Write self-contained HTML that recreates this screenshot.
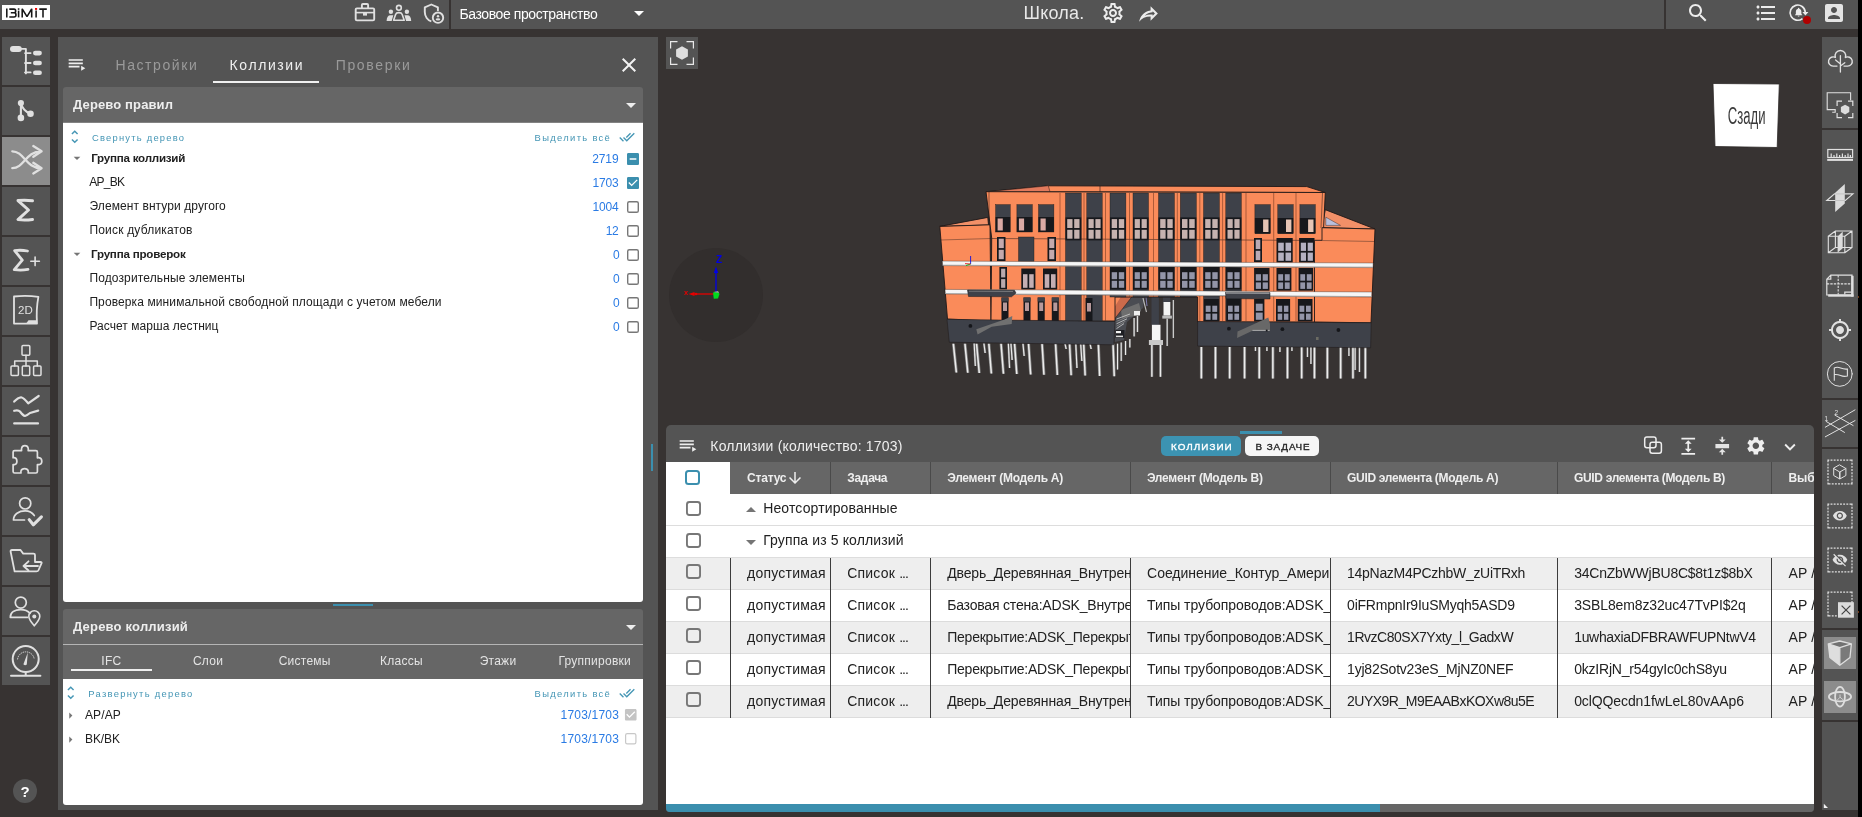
<!DOCTYPE html>
<html><head><meta charset="utf-8"><title>BIMIT</title>
<style>
html,body{margin:0;padding:0}
body{width:1862px;height:817px;overflow:hidden;background:#373332;position:relative;font-family:"Liberation Sans",sans-serif}
.b{position:absolute;display:block}
.t{position:absolute;white-space:pre;overflow:visible}
</style></head><body><div id="app" style="position:absolute;left:0;top:0;width:1862px;height:817px;will-change:transform">
<div class="b" style="left:1858px;top:0px;width:4px;height:817px;background:#000;"></div>
<div class="b" style="left:0px;top:0px;width:1858px;height:29px;background:#545454;"></div>
<div class="b" style="left:2px;top:37px;width:48px;height:48px;background:#545454;"></div>
<div class="b" style="left:2px;top:87px;width:48px;height:48px;background:#545454;"></div>
<div class="b" style="left:2px;top:137px;width:48px;height:48px;background:#8c8c8c;"></div>
<div class="b" style="left:2px;top:187px;width:48px;height:48px;background:#545454;"></div>
<div class="b" style="left:2px;top:237px;width:48px;height:48px;background:#545454;"></div>
<div class="b" style="left:2px;top:287px;width:48px;height:48px;background:#545454;"></div>
<div class="b" style="left:2px;top:337px;width:48px;height:48px;background:#545454;"></div>
<div class="b" style="left:2px;top:387px;width:48px;height:48px;background:#545454;"></div>
<div class="b" style="left:2px;top:437px;width:48px;height:48px;background:#545454;"></div>
<div class="b" style="left:2px;top:487px;width:48px;height:48px;background:#545454;"></div>
<div class="b" style="left:2px;top:537px;width:48px;height:48px;background:#545454;"></div>
<div class="b" style="left:2px;top:587px;width:48px;height:48px;background:#545454;"></div>
<div class="b" style="left:2px;top:637px;width:48px;height:48px;background:#545454;"></div>
<div class="b" style="left:13px;top:779px;width:24px;height:24px;background:#545454;border-radius:50%"></div>
<div class="t" style="left:20.42px;top:779.50px;height:24px;line-height:24px;font-size:15px;color:#fff;font-weight:700;">?</div>
<div class="b" style="left:58px;top:37px;width:600px;height:772.5px;background:#545454;"></div>
<div class="b" style="left:63px;top:87px;width:580px;height:35px;background:#666666;border-radius:3px 3px 0 0"></div>
<div class="b" style="left:63px;top:121.5px;width:580px;height:480.5px;background:#fff;border-radius:0 0 3px 3px"></div>
<div class="b" style="left:63px;top:121.5px;width:580px;height:1.5px;background:linear-gradient(#4a4a4a,#bbb);"></div>
<div class="b" style="left:333px;top:604px;width:40px;height:2px;background:#3b8fae;"></div>
<div class="b" style="left:651px;top:444px;width:2px;height:27px;background:#3b8fae;"></div>
<div class="b" style="left:63px;top:609px;width:580px;height:70px;background:#666666;border-radius:3px 3px 0 0"></div>
<div class="b" style="left:63px;top:644px;width:580px;height:1px;background:#b5b5b5;"></div>
<div class="b" style="left:63px;top:678.5px;width:580px;height:126px;background:#fff;border-radius:0 0 3px 3px"></div>
<div class="b" style="left:666px;top:37px;width:32px;height:32px;background:#545454;"></div>
<div class="b" style="left:666px;top:425px;width:1148px;height:387px;background:#545454;border-radius:5px 5px 4px 4px"></div>
<div class="b" style="left:666px;top:461.5px;width:1148px;height:342.5px;background:#fff;"></div>
<div class="b" style="left:730px;top:461.5px;width:1084px;height:32px;background:#666666;"></div>
<div class="b" style="left:666px;top:804px;width:1148px;height:8px;background:#666;border-radius:0 0 4px 4px"></div>
<div class="b" style="left:666px;top:804px;width:714px;height:8px;background:#3b8fae;border-radius:0 0 0 4px"></div>
<div class="b" style="left:1822px;top:37px;width:36px;height:772.5px;background:#545454;"></div>
<div class="b" style="left:1822px;top:128px;width:36px;height:2px;background:#373332;"></div>
<div class="b" style="left:1822px;top:397.5px;width:36px;height:2px;background:#373332;"></div>
<div class="b" style="left:1822px;top:446.5px;width:36px;height:2px;background:#373332;"></div>
<div class="b" style="left:1822px;top:627.5px;width:36px;height:2px;background:#373332;"></div>
<div class="b" style="left:1822px;top:720px;width:36px;height:2px;background:#373332;"></div>
<div class="b" style="left:1824px;top:637px;width:32px;height:32px;background:#8c8c8c;"></div>
<div class="b" style="left:1824px;top:681px;width:32px;height:32px;background:#8c8c8c;"></div>
<div class="b" style="left:449px;top:0px;width:2px;height:29px;background:#373332;"></div>
<div class="b" style="left:1664px;top:0px;width:2px;height:29px;background:#373332;"></div>
<div class="t" style="left:459.40px;top:3.00px;height:22px;line-height:22px;font-size:14px;color:#fff;letter-spacing:-0.403px;">Базовое пространство</div>
<div class="t" style="left:1023.60px;top:-1.00px;height:29px;line-height:29px;font-size:18px;color:#e8e8e8;letter-spacing:0.179px;">Школа.</div>
<div class="t" style="left:115.50px;top:54.00px;height:22px;line-height:22px;font-size:14px;color:#9a9a9a;letter-spacing:1.569px;">Настройки</div>
<div class="t" style="left:229.60px;top:54.00px;height:22px;line-height:22px;font-size:14px;color:#f0f0f0;letter-spacing:1.592px;">Коллизии</div>
<div class="t" style="left:335.70px;top:54.00px;height:22px;line-height:22px;font-size:14px;color:#9a9a9a;letter-spacing:1.667px;">Проверки</div>
<div class="b" style="left:213px;top:81px;width:106px;height:2px;background:#f0f0f0;"></div>
<div class="t" style="left:73.00px;top:94.00px;height:21px;line-height:21px;font-size:13px;color:#eee;font-weight:700;letter-spacing:0.128px;">Дерево правил</div>
<div class="t" style="left:92.00px;top:130.00px;height:15px;line-height:15px;font-size:9.4px;color:#4596b5;letter-spacing:1.220px;">Свернуть дерево</div>
<div class="t" style="left:534.60px;top:130.00px;height:15px;line-height:15px;font-size:9.4px;color:#4596b5;letter-spacing:1.328px;">Выделить всё</div>
<div class="t" style="left:91.20px;top:148.20px;height:19px;line-height:19px;font-size:11.6px;color:#212121;font-weight:700;letter-spacing:-0.239px;">Группа коллизий</div>
<div class="t" style="left:592.20px;top:149.50px;height:19px;line-height:19px;font-size:12px;color:#2a7be4;letter-spacing:-0.099px;">2719</div>
<div class="t" style="left:89.30px;top:173.00px;height:19px;line-height:19px;font-size:12px;color:#212121;letter-spacing:-0.748px;">AP_BK</div>
<div class="t" style="left:592.50px;top:173.50px;height:19px;line-height:19px;font-size:12px;color:#2a7be4;letter-spacing:-0.199px;">1703</div>
<div class="t" style="left:89.50px;top:197.00px;height:19px;line-height:19px;font-size:12px;color:#212121;letter-spacing:0.080px;">Элемент внтури другого</div>
<div class="t" style="left:592.50px;top:197.50px;height:19px;line-height:19px;font-size:12px;color:#2a7be4;letter-spacing:-0.199px;">1004</div>
<div class="t" style="left:89.40px;top:221.00px;height:19px;line-height:19px;font-size:12px;color:#212121;letter-spacing:0.194px;">Поиск дубликатов</div>
<div class="t" style="left:605.70px;top:221.50px;height:19px;line-height:19px;font-size:12px;color:#2a7be4;letter-spacing:-0.448px;">12</div>
<div class="t" style="left:91.00px;top:244.20px;height:19px;line-height:19px;font-size:11.6px;color:#212121;font-weight:700;letter-spacing:-0.214px;">Группа проверок</div>
<div class="t" style="left:613.00px;top:245.50px;height:19px;line-height:19px;font-size:12px;color:#2a7be4;">0</div>
<div class="t" style="left:89.40px;top:269.00px;height:19px;line-height:19px;font-size:12px;color:#212121;letter-spacing:0.127px;">Подозрительные элементы</div>
<div class="t" style="left:613.00px;top:269.50px;height:19px;line-height:19px;font-size:12px;color:#2a7be4;">0</div>
<div class="t" style="left:89.40px;top:293.00px;height:19px;line-height:19px;font-size:12px;color:#212121;letter-spacing:0.109px;">Проверка минимальной свободной площади с учетом мебели</div>
<div class="t" style="left:613.00px;top:293.50px;height:19px;line-height:19px;font-size:12px;color:#2a7be4;">0</div>
<div class="t" style="left:89.40px;top:317.00px;height:19px;line-height:19px;font-size:12px;color:#212121;letter-spacing:0.052px;">Расчет марша лестниц</div>
<div class="t" style="left:613.00px;top:317.50px;height:19px;line-height:19px;font-size:12px;color:#2a7be4;">0</div>
<div class="t" style="left:73.00px;top:616.00px;height:21px;line-height:21px;font-size:13px;color:#eee;font-weight:700;letter-spacing:0.193px;">Дерево коллизий</div>
<div class="t" style="left:101.31px;top:651.50px;height:19px;line-height:19px;font-size:12px;color:#e4e4e4;letter-spacing:0.25px;">IFC</div>
<div class="t" style="left:192.93px;top:651.50px;height:19px;line-height:19px;font-size:12px;color:#e4e4e4;letter-spacing:0.25px;">Слои</div>
<div class="t" style="left:278.69px;top:651.50px;height:19px;line-height:19px;font-size:12px;color:#e4e4e4;letter-spacing:0.25px;">Системы</div>
<div class="t" style="left:379.97px;top:651.50px;height:19px;line-height:19px;font-size:12px;color:#e4e4e4;letter-spacing:0.25px;">Классы</div>
<div class="t" style="left:479.71px;top:651.50px;height:19px;line-height:19px;font-size:12px;color:#e4e4e4;letter-spacing:0.25px;">Этажи</div>
<div class="t" style="left:558.48px;top:651.50px;height:19px;line-height:19px;font-size:12px;color:#e4e4e4;letter-spacing:0.25px;">Группировки</div>
<div class="b" style="left:71px;top:669px;width:81px;height:2px;background:#eee;"></div>
<div class="t" style="left:88.30px;top:686.00px;height:15px;line-height:15px;font-size:9.4px;color:#4596b5;letter-spacing:1.280px;">Развернуть дерево</div>
<div class="t" style="left:534.60px;top:686.00px;height:15px;line-height:15px;font-size:9.4px;color:#4596b5;letter-spacing:1.328px;">Выделить всё</div>
<div class="t" style="left:85.00px;top:705.50px;height:19px;line-height:19px;font-size:12px;color:#212121;letter-spacing:0.112px;">AP/AP</div>
<div class="t" style="left:85.00px;top:729.50px;height:19px;line-height:19px;font-size:12px;color:#212121;letter-spacing:-0.088px;">BK/BK</div>
<div class="t" style="left:560.60px;top:706.00px;height:19px;line-height:19px;font-size:12px;color:#2a7be4;letter-spacing:0.197px;">1703/1703</div>
<div class="t" style="left:560.60px;top:730.00px;height:19px;line-height:19px;font-size:12px;color:#2a7be4;letter-spacing:0.197px;">1703/1703</div>
<div class="t" style="left:710.30px;top:435.00px;height:22px;line-height:22px;font-size:14px;color:#eee;letter-spacing:0.185px;">Коллизии (количество: 1703)</div>
<div class="b" style="left:1161px;top:435.7px;width:80px;height:20.4px;background:#3c93b2;border-radius:5px"></div>
<div class="b" style="left:1245px;top:435.7px;width:73.8px;height:20.4px;background:#f6f6f6;border-radius:5px"></div>
<div class="t" style="left:1171.00px;top:439.20px;height:16px;line-height:16px;font-size:9.9px;color:#fff;letter-spacing:1.034px;-webkit-text-stroke:0.35px #fff;">КОЛЛИЗИИ</div>
<div class="t" style="left:1255.50px;top:439.20px;height:16px;line-height:16px;font-size:9.9px;color:#262626;letter-spacing:0.900px;-webkit-text-stroke:0.35px #262626;">В ЗАДАЧЕ</div>
<div class="b" style="left:1240px;top:431px;width:42px;height:2.8px;background:#3b8fae;"></div>
<div class="b" style="left:830px;top:461.5px;width:1px;height:32px;background:#4a4a4a;"></div>
<div class="b" style="left:930px;top:461.5px;width:1px;height:32px;background:#4a4a4a;"></div>
<div class="b" style="left:1130px;top:461.5px;width:1px;height:32px;background:#4a4a4a;"></div>
<div class="b" style="left:1330px;top:461.5px;width:1px;height:32px;background:#4a4a4a;"></div>
<div class="b" style="left:1557px;top:461.5px;width:1px;height:32px;background:#4a4a4a;"></div>
<div class="b" style="left:1771px;top:461.5px;width:1px;height:32px;background:#4a4a4a;"></div>
<div class="t" style="left:747.00px;top:468.50px;height:19px;line-height:19px;font-size:12px;color:#eee;font-weight:700;letter-spacing:-0.189px;">Статус</div>
<div class="t" style="left:847.30px;top:468.50px;height:19px;line-height:19px;font-size:12px;color:#eee;font-weight:700;letter-spacing:-0.325px;">Задача</div>
<div class="t" style="left:947.20px;top:468.50px;height:19px;line-height:19px;font-size:12px;color:#eee;font-weight:700;letter-spacing:-0.275px;">Элемент (Модель A)</div>
<div class="t" style="left:1146.90px;top:468.50px;height:19px;line-height:19px;font-size:12px;color:#eee;font-weight:700;letter-spacing:-0.275px;">Элемент (Модель B)</div>
<div class="t" style="left:1347.10px;top:468.50px;height:19px;line-height:19px;font-size:12px;color:#eee;font-weight:700;letter-spacing:-0.325px;">GUID элемента (Модель A)</div>
<div class="t" style="left:1574.00px;top:468.50px;height:19px;line-height:19px;font-size:12px;color:#eee;font-weight:700;letter-spacing:-0.325px;">GUID элемента (Модель B)</div>
<div class="b" style="left:1771px;top:461.5px;width:43px;height:32px;overflow:hidden">
<div class="t" style="left:17.40px;top:7.00px;height:19px;line-height:19px;font-size:12px;color:#eee;font-weight:700;">Выбор</div>
</div>
<div class="b" style="left:666px;top:524.5px;width:1148px;height:1px;background:#ddd;"></div>
<div class="b" style="left:666px;top:556.5px;width:1148px;height:1px;background:#ddd;"></div>
<div class="b" style="left:666px;top:557.5px;width:1148px;height:32px;background:#eeeeee;"></div>
<div class="b" style="left:666px;top:588.5px;width:1148px;height:1px;background:#dcdcdc;"></div>
<div class="b" style="left:666px;top:589.5px;width:1148px;height:32px;background:#fff;"></div>
<div class="b" style="left:666px;top:620.5px;width:1148px;height:1px;background:#dcdcdc;"></div>
<div class="b" style="left:666px;top:621.5px;width:1148px;height:32px;background:#eeeeee;"></div>
<div class="b" style="left:666px;top:652.5px;width:1148px;height:1px;background:#dcdcdc;"></div>
<div class="b" style="left:666px;top:653.5px;width:1148px;height:32px;background:#fff;"></div>
<div class="b" style="left:666px;top:684.5px;width:1148px;height:1px;background:#dcdcdc;"></div>
<div class="b" style="left:666px;top:685.5px;width:1148px;height:32px;background:#eeeeee;"></div>
<div class="b" style="left:666px;top:716.5px;width:1148px;height:1px;background:#dcdcdc;"></div>
<div class="b" style="left:730px;top:557.5px;width:1px;height:160px;background:#3c3c3c;"></div>
<div class="b" style="left:830px;top:557.5px;width:1px;height:160px;background:#3c3c3c;"></div>
<div class="b" style="left:930px;top:557.5px;width:1px;height:160px;background:#3c3c3c;"></div>
<div class="b" style="left:1130px;top:557.5px;width:1px;height:160px;background:#3c3c3c;"></div>
<div class="b" style="left:1330px;top:557.5px;width:1px;height:160px;background:#3c3c3c;"></div>
<div class="b" style="left:1557px;top:557.5px;width:1px;height:160px;background:#3c3c3c;"></div>
<div class="b" style="left:1771px;top:557.5px;width:1px;height:160px;background:#3c3c3c;"></div>
<div class="t" style="left:763.20px;top:496.50px;height:22px;line-height:22px;font-size:14px;color:#212121;letter-spacing:0.135px;">Неотсортированные</div>
<div class="t" style="left:763.20px;top:528.50px;height:22px;line-height:22px;font-size:14px;color:#212121;letter-spacing:0.119px;">Группа из 5 коллизий</div>
<div class="t" style="left:747.00px;top:561.50px;height:22px;line-height:22px;font-size:14px;color:#212121;letter-spacing:0.233px;">допустимая</div>
<div class="t" style="left:847.30px;top:561.50px;height:22px;line-height:22px;font-size:14px;color:#212121;letter-spacing:0.184px;">Список</div>
<div class="t" style="left:899.20px;top:561.50px;height:22px;line-height:22px;font-size:14px;color:#212121;letter-spacing:-1px;">...</div>
<div class="b" style="left:931px;top:557.5px;width:199px;height:31px;overflow:hidden">
<div class="t" style="left:16.20px;top:4.00px;height:22px;line-height:22px;font-size:14px;color:#212121;letter-spacing:-0.127px;">Дверь_Деревянная_Внутренняя</div>
</div>
<div class="b" style="left:1131px;top:557.5px;width:199px;height:31px;overflow:hidden">
<div class="t" style="left:16.10px;top:4.00px;height:22px;line-height:22px;font-size:14px;color:#212121;letter-spacing:-0.037px;">Соединение_Контур_Американка</div>
</div>
<div class="t" style="left:1347.10px;top:561.50px;height:22px;line-height:22px;font-size:14px;color:#212121;letter-spacing:-0.295px;">14pNazM4PCzhbW_zUiTRxh</div>
<div class="t" style="left:1574.20px;top:561.50px;height:22px;line-height:22px;font-size:14px;color:#212121;letter-spacing:-0.235px;">34CnZbWWjBU8C$8t1z$8bX</div>
<div class="b" style="left:1772px;top:557.5px;width:42px;height:31px;overflow:hidden">
<div class="t" style="left:16.40px;top:4.00px;height:22px;line-height:22px;font-size:14px;color:#212121;letter-spacing:0.150px;">AP / BK</div>
</div>
<div class="t" style="left:747.00px;top:593.50px;height:22px;line-height:22px;font-size:14px;color:#212121;letter-spacing:0.233px;">допустимая</div>
<div class="t" style="left:847.30px;top:593.50px;height:22px;line-height:22px;font-size:14px;color:#212121;letter-spacing:0.184px;">Список</div>
<div class="t" style="left:899.20px;top:593.50px;height:22px;line-height:22px;font-size:14px;color:#212121;letter-spacing:-1px;">...</div>
<div class="b" style="left:931px;top:589.5px;width:199px;height:31px;overflow:hidden">
<div class="t" style="left:16.20px;top:4.00px;height:22px;line-height:22px;font-size:14px;color:#212121;letter-spacing:-0.193px;">Базовая стена:ADSK_Внутренняя</div>
</div>
<div class="b" style="left:1131px;top:589.5px;width:199px;height:31px;overflow:hidden">
<div class="t" style="left:16.10px;top:4.00px;height:22px;line-height:22px;font-size:14px;color:#212121;letter-spacing:-0.055px;">Типы трубопроводов:ADSK_Сталь</div>
</div>
<div class="t" style="left:1347.10px;top:593.50px;height:22px;line-height:22px;font-size:14px;color:#212121;letter-spacing:-0.231px;">0iFRmpnIr9IuSMyqh5ASD9</div>
<div class="t" style="left:1574.20px;top:593.50px;height:22px;line-height:22px;font-size:14px;color:#212121;letter-spacing:-0.131px;">3SBL8em8z32uc47TvPI$2q</div>
<div class="b" style="left:1772px;top:589.5px;width:42px;height:31px;overflow:hidden">
<div class="t" style="left:16.40px;top:4.00px;height:22px;line-height:22px;font-size:14px;color:#212121;letter-spacing:0.150px;">AP / BK</div>
</div>
<div class="t" style="left:747.00px;top:625.50px;height:22px;line-height:22px;font-size:14px;color:#212121;letter-spacing:0.233px;">допустимая</div>
<div class="t" style="left:847.30px;top:625.50px;height:22px;line-height:22px;font-size:14px;color:#212121;letter-spacing:0.184px;">Список</div>
<div class="t" style="left:899.20px;top:625.50px;height:22px;line-height:22px;font-size:14px;color:#212121;letter-spacing:-1px;">...</div>
<div class="b" style="left:931px;top:621.5px;width:199px;height:31px;overflow:hidden">
<div class="t" style="left:16.20px;top:4.00px;height:22px;line-height:22px;font-size:14px;color:#212121;letter-spacing:-0.226px;">Перекрытие:ADSK_Перекрытие</div>
</div>
<div class="b" style="left:1131px;top:621.5px;width:199px;height:31px;overflow:hidden">
<div class="t" style="left:16.10px;top:4.00px;height:22px;line-height:22px;font-size:14px;color:#212121;letter-spacing:-0.055px;">Типы трубопроводов:ADSK_Сталь</div>
</div>
<div class="t" style="left:1347.10px;top:625.50px;height:22px;line-height:22px;font-size:14px;color:#212121;letter-spacing:-0.482px;">1RvzC80SX7Yxty_l_GadxW</div>
<div class="t" style="left:1574.20px;top:625.50px;height:22px;line-height:22px;font-size:14px;color:#212121;letter-spacing:-0.321px;">1uwhaxiaDFBRAWFUPNtwV4</div>
<div class="b" style="left:1772px;top:621.5px;width:42px;height:31px;overflow:hidden">
<div class="t" style="left:16.40px;top:4.00px;height:22px;line-height:22px;font-size:14px;color:#212121;letter-spacing:0.150px;">AP / BK</div>
</div>
<div class="t" style="left:747.00px;top:657.50px;height:22px;line-height:22px;font-size:14px;color:#212121;letter-spacing:0.233px;">допустимая</div>
<div class="t" style="left:847.30px;top:657.50px;height:22px;line-height:22px;font-size:14px;color:#212121;letter-spacing:0.184px;">Список</div>
<div class="t" style="left:899.20px;top:657.50px;height:22px;line-height:22px;font-size:14px;color:#212121;letter-spacing:-1px;">...</div>
<div class="b" style="left:931px;top:653.5px;width:199px;height:31px;overflow:hidden">
<div class="t" style="left:16.20px;top:4.00px;height:22px;line-height:22px;font-size:14px;color:#212121;letter-spacing:-0.226px;">Перекрытие:ADSK_Перекрытие</div>
</div>
<div class="b" style="left:1131px;top:653.5px;width:199px;height:31px;overflow:hidden">
<div class="t" style="left:16.10px;top:4.00px;height:22px;line-height:22px;font-size:14px;color:#212121;letter-spacing:-0.055px;">Типы трубопроводов:ADSK_Сталь</div>
</div>
<div class="t" style="left:1347.10px;top:657.50px;height:22px;line-height:22px;font-size:14px;color:#212121;letter-spacing:-0.223px;">1yj82Sotv23eS_MjNZ0NEF</div>
<div class="t" style="left:1574.20px;top:657.50px;height:22px;line-height:22px;font-size:14px;color:#212121;letter-spacing:-0.209px;">0kzIRjN_r54gyIc0chS8yu</div>
<div class="b" style="left:1772px;top:653.5px;width:42px;height:31px;overflow:hidden">
<div class="t" style="left:16.40px;top:4.00px;height:22px;line-height:22px;font-size:14px;color:#212121;letter-spacing:0.150px;">AP / BK</div>
</div>
<div class="t" style="left:747.00px;top:689.50px;height:22px;line-height:22px;font-size:14px;color:#212121;letter-spacing:0.233px;">допустимая</div>
<div class="t" style="left:847.30px;top:689.50px;height:22px;line-height:22px;font-size:14px;color:#212121;letter-spacing:0.184px;">Список</div>
<div class="t" style="left:899.20px;top:689.50px;height:22px;line-height:22px;font-size:14px;color:#212121;letter-spacing:-1px;">...</div>
<div class="b" style="left:931px;top:685.5px;width:199px;height:31px;overflow:hidden">
<div class="t" style="left:16.20px;top:4.00px;height:22px;line-height:22px;font-size:14px;color:#212121;letter-spacing:-0.127px;">Дверь_Деревянная_Внутренняя</div>
</div>
<div class="b" style="left:1131px;top:685.5px;width:199px;height:31px;overflow:hidden">
<div class="t" style="left:16.10px;top:4.00px;height:22px;line-height:22px;font-size:14px;color:#212121;letter-spacing:-0.055px;">Типы трубопроводов:ADSK_Сталь</div>
</div>
<div class="t" style="left:1347.10px;top:689.50px;height:22px;line-height:22px;font-size:14px;color:#212121;letter-spacing:-0.516px;">2UYX9R_M9EAABxKOXw8u5E</div>
<div class="t" style="left:1574.20px;top:689.50px;height:22px;line-height:22px;font-size:14px;color:#212121;letter-spacing:-0.105px;">0clQQecdn1fwLeL80vAAp6</div>
<div class="b" style="left:1772px;top:685.5px;width:42px;height:31px;overflow:hidden">
<div class="t" style="left:16.40px;top:4.00px;height:22px;line-height:22px;font-size:14px;color:#212121;letter-spacing:0.150px;">AP / BK</div>
</div>
<svg class="b" style="left:353px;top:0px;" width="24" height="24" viewBox="0 0 24 24"><g fill="none" stroke="#e0e0e0" stroke-width="1.9" stroke-linejoin="round"><rect x="2.7" y="8.4" width="18.5" height="12" rx="1.2"/><path d="M8.9 8.2 V5 Q8.9 4 9.9 4 H14.1 Q15.1 4 15.1 5 V8.2"/><path d="M2.7 12.6 H21.2" stroke-width="1.6"/></g><rect x="10" y="12.6" width="4" height="3" fill="#e0e0e0"/></svg>
<svg class="b" style="left:386px;top:0px;" width="26" height="26" viewBox="0 0 26 26"><g fill="none" stroke="#e0e0e0" stroke-width="1.6"><circle cx="12.9" cy="7.8" r="2.4"/><path d="M7.6 20.3 L9.6 14.4 Q10.2 12.6 12.9 12.6 Q15.6 12.6 16.2 14.4 L18.2 20.3 Z" stroke-linejoin="round"/></g>
<g fill="#e0e0e0"><circle cx="4.9" cy="11.8" r="2.2"/><circle cx="20.9" cy="11.8" r="2.2"/><path d="M0.6 21 Q0.8 15.2 4.6 15.3 L7.3 15.3 L5.7 21Z"/><path d="M25.2 21 Q25 15.2 21.2 15.3 L18.5 15.3 L20.1 21Z"/></g></svg>
<svg class="b" style="left:420px;top:0px;" width="28" height="28" viewBox="0 0 28 28"><g fill="none" stroke="#e0e0e0" stroke-width="1.9" stroke-linejoin="round"><path d="M17.9 11 V7.3 L11.3 4.5 L4.8 7.3 V12 C4.8 16.5 7.6 20.3 11.3 21.3"/><circle cx="18" cy="17.7" r="5.2"/></g><circle cx="18" cy="16.2" r="1.2" fill="#e0e0e0"/><ellipse cx="18" cy="19.4" rx="2.3" ry="1.1" fill="#e0e0e0"/></svg>
<svg class="b" style="left:627.0px;top:0.8000000000000007px;" width="24" height="24" viewBox="0 0 24 24"><path fill="#fff" d="M7 10l5 5 5-5z"/></svg>
<svg class="b" style="left:1101.0px;top:1.0px;" width="24" height="24" viewBox="0 0 24 24"><path fill="#ececec" d="M19.43 12.98c.04-.32.07-.64.07-.98 0-.34-.03-.66-.07-.98l2.11-1.65c.19-.15.24-.42.12-.64l-2-3.46c-.09-.16-.26-.25-.44-.25-.06 0-.12.01-.17.03l-2.49 1c-.52-.4-1.08-.73-1.69-.98l-.38-2.65C14.46 2.18 14.25 2 14 2h-4c-.25 0-.46.18-.49.42l-.38 2.65c-.61.25-1.17.59-1.69.98l-2.49-1c-.06-.02-.12-.03-.18-.03-.17 0-.34.09-.43.25l-2 3.46c-.13.22-.07.49.12.64l2.11 1.65c-.04.32-.07.65-.07.98 0 .33.03.66.07.98l-2.11 1.65c-.19.15-.24.42-.12.64l2 3.46c.09.16.26.25.44.25.06 0 .12-.01.17-.03l2.49-1c.52.4 1.08.73 1.69.98l.38 2.65c.03.24.24.42.49.42h4c.25 0 .46-.18.49-.42l.38-2.65c.61-.25 1.17-.59 1.69-.98l2.49 1c.06.02.12.03.18.03.17 0 .34-.09.43-.25l2-3.46c.12-.22.07-.49-.12-.64l-2.11-1.65zm-1.98-1.71c.04.31.05.52.05.73 0 .21-.02.43-.05.73l-.14 1.13.89.7 1.08.84-.7 1.21-1.27-.51-1.04-.42-.9.68c-.43.32-.84.56-1.25.73l-1.06.43-.16 1.13-.2 1.35h-1.4l-.19-1.35-.16-1.13-1.06-.43c-.43-.18-.83-.41-1.23-.71l-.91-.7-1.06.43-1.27.51-.7-1.21 1.08-.84.89-.7-.14-1.13c-.03-.31-.05-.54-.05-.74s.02-.43.05-.73l.14-1.13-.89-.7-1.08-.84.7-1.21 1.27.51 1.04.42.9-.68c.43-.32.84-.56 1.25-.73l1.06-.43.16-1.13.2-1.35h1.39l.19 1.35.16 1.13 1.06.43c.43.18.83.41 1.23.71l.91.7 1.06-.43 1.27-.51.7 1.21-1.07.85-.89.7.14 1.13zM12 8c-2.21 0-4 1.79-4 4s1.79 4 4 4 4-1.79 4-4-1.79-4-4-4zm0 6c-1.1 0-2-.9-2-2s.9-2 2-2 2 .9 2 2-.9 2-2 2z"/></svg>
<svg class="b" style="left:1136.2px;top:0.9000000000000004px;" width="25" height="25" viewBox="0 0 24 24"><path fill="#ececec" d="M14,5V9C7,10 4,15 3,20C5.5,16.5 9,14.9 14,14.9V19L21,12L14,5M16,9.83L18.17,12L16,14.17V12.9H14C11.93,12.9 10.07,13.28 8.34,14.07C9.74,12.68 11.54,11.39 14.28,11L16,10.73V9.83Z"/></svg>
<svg class="b" style="left:1686.0px;top:1.0px;" width="24" height="24" viewBox="0 0 24 24"><path fill="#ececec" d="M15.5 14h-.79l-.28-.27C15.41 12.59 16 11.11 16 9.5 16 5.91 13.09 3 9.5 3S3 5.91 3 9.5 5.91 16 9.5 16c1.61 0 3.09-.59 4.23-1.57l.27.28v.79l5 4.99L20.49 19l-4.99-5zm-6 0C7.01 14 5 11.99 5 9.5S7.01 5 9.5 5 14 7.01 14 9.5 11.99 14 9.5 14z"/></svg>
<svg class="b" style="left:1754.4px;top:0.5px;" width="24" height="24" viewBox="0 0 24 24"><path fill="#ececec" d="M4 10.5c-.83 0-1.5.67-1.5 1.5s.67 1.5 1.5 1.5 1.5-.67 1.5-1.5-.67-1.5-1.5-1.5zm0-6c-.83 0-1.5.67-1.5 1.5S3.17 7.5 4 7.5 5.5 6.83 5.5 6 4.83 4.5 4 4.5zm0 12c-.83 0-1.5.68-1.5 1.5s.68 1.5 1.5 1.5 1.5-.68 1.5-1.5-.67-1.5-1.5-1.5zM7 19h14v-2H7v2zm0-6h14v-2H7v2zm0-8v2h14V5H7z"/></svg>
<svg class="b" style="left:1788px;top:2px;" width="24" height="24" viewBox="0 0 24 24"><path d="M17.3 10.2 A7.6 7.6 0 1 0 14.5 16.6" fill="none" stroke="#ececec" stroke-width="1.6"/><path d="M14.4 10 H20.4 L17.4 13.6Z" fill="#ececec"/><g transform="translate(5.1,4.6) scale(0.46)"><path fill="#ececec" d="M12 22c1.1 0 2-.9 2-2h-4c0 1.1.89 2 2 2zm6-6v-5c0-3.07-1.64-5.64-4.5-6.32V4c0-.83-.67-1.5-1.5-1.5s-1.5.67-1.5 1.5v.68C7.63 5.36 6 7.92 6 11v5l-2 2v1h16v-1l-2-2z"/></g><circle cx="19" cy="18" r="4" fill="#b00000"/></svg>
<svg class="b" style="left:1822.0px;top:1.0px;" width="24" height="24" viewBox="0 0 24 24"><path fill="#e4e4e4" d="M3 5v14c0 1.1.89 2 2 2h14c1.1 0 2-.9 2-2V5c0-1.1-.9-2-2-2H5c-1.11 0-2 .9-2 2zm12 4c0 1.66-1.34 3-3 3s-3-1.34-3-3 1.34-3 3-3 3 1.34 3 3zm-9 8c0-2 4-3.1 6-3.1s6 1.1 6 3.1v1H6v-1z"/></svg>
<svg class="b" style="left:67.0px;top:55.0px;" width="20" height="20" viewBox="0 0 24 24"><path fill="#eee" d="M19 9H2v2h17V9zm0-4H2v2h17V5zM2 15h13v-2H2v2zm15-2v6l5-3-5-3z"/></svg>
<svg class="b" style="left:617.3px;top:53.0px;" width="24" height="24" viewBox="0 0 24 24"><path fill="#f2f2f2" d="M19 6.41L17.59 5 12 10.59 6.41 5 5 6.41 10.59 12 5 17.59 6.41 19 12 13.41 17.59 19 19 17.59 13.41 12z"/></svg>
<svg class="b" style="left:619.0px;top:92.5px;" width="24" height="24" viewBox="0 0 24 24"><path fill="#eee" d="M7 10l5 5 5-5z"/></svg>
<svg class="b" style="left:619.0px;top:614.5px;" width="24" height="24" viewBox="0 0 24 24"><path fill="#eee" d="M7 10l5 5 5-5z"/></svg>
<svg class="b" style="left:66.25px;top:128.45px;" width="17.5" height="17.5" viewBox="0 0 24 24"><path fill="#4596b5" d="M12 5.83L15.17 9l1.41-1.41L12 3 7.41 7.59 8.83 9 12 5.83zm0 12.34L8.83 15l-1.41 1.41L12 21l4.59-4.59L15.17 15 12 18.17z"/></svg>
<svg class="b" style="left:62.25px;top:684.45px;" width="17.5" height="17.5" viewBox="0 0 24 24"><path fill="#4596b5" d="M12 5.83L15.17 9l1.41-1.41L12 3 7.41 7.59 8.83 9 12 5.83zm0 12.34L8.83 15l-1.41 1.41L12 21l4.59-4.59L15.17 15 12 18.17z"/></svg>
<svg class="b" style="left:619.4px;top:129.3px;" width="16" height="16" viewBox="0 0 24 24"><path fill="#4596b5" d="M18 7l-1.41-1.41-6.34 6.34 1.41 1.41L18 7zm4.24-1.41L11.66 16.17 7.48 12l-1.41 1.41L11.66 19l12-12-1.42-1.41zM.41 13.41L6 19l1.41-1.41L1.83 12 .41 13.41z"/></svg>
<svg class="b" style="left:619.4px;top:685.3px;" width="16" height="16" viewBox="0 0 24 24"><path fill="#4596b5" d="M18 7l-1.41-1.41-6.34 6.34 1.41 1.41L18 7zm4.24-1.41L11.66 16.17 7.48 12l-1.41 1.41L11.66 19l12-12-1.42-1.41zM.41 13.41L6 19l1.41-1.41L1.83 12 .41 13.41z"/></svg>
<svg class="b" style="left:68.7px;top:150.3px;" width="16" height="16" viewBox="0 0 24 24"><path fill="#757575" d="M7 10l5 5 5-5z"/></svg>
<svg class="b" style="left:68.7px;top:246.3px;" width="16" height="16" viewBox="0 0 24 24"><path fill="#757575" d="M7 10l5 5 5-5z"/></svg>
<svg class="b" style="left:63.099999999999994px;top:707.5px;" width="15" height="15" viewBox="0 0 24 24"><path fill="#757575" d="M10 17l5-5-5-5v10z"/></svg>
<svg class="b" style="left:63.099999999999994px;top:731.5px;" width="15" height="15" viewBox="0 0 24 24"><path fill="#757575" d="M10 17l5-5-5-5v10z"/></svg>
<svg class="b" style="left:625.0px;top:151.0px;" width="16" height="16" viewBox="0 0 24 24"><path fill="#3b8fae" d="M19 3H5c-1.1 0-2 .9-2 2v14c0 1.1.9 2 2 2h14c1.1 0 2-.9 2-2V5c0-1.1-.9-2-2-2zm-2 10H7v-2h10v2z"/></svg>
<svg class="b" style="left:625.0px;top:175.0px;" width="16" height="16" viewBox="0 0 24 24"><path fill="#3b8fae" d="M19 3H5c-1.11 0-2 .9-2 2v14c0 1.1.89 2 2 2h14c1.11 0 2-.9 2-2V5c0-1.1-.89-2-2-2zm-9 14l-5-5 1.41-1.41L10 14.17l7.59-7.59L19 8l-9 9z"/></svg>
<svg class="b" style="left:625.0px;top:199.0px" width="16" height="16"><rect x="2.7" y="2.7" width="10.6" height="10.6" rx="1.6" fill="none" stroke="#777" stroke-width="1.4"/></svg>
<svg class="b" style="left:625.0px;top:223.0px" width="16" height="16"><rect x="2.7" y="2.7" width="10.6" height="10.6" rx="1.6" fill="none" stroke="#777" stroke-width="1.4"/></svg>
<svg class="b" style="left:625.0px;top:247.0px" width="16" height="16"><rect x="2.7" y="2.7" width="10.6" height="10.6" rx="1.6" fill="none" stroke="#777" stroke-width="1.4"/></svg>
<svg class="b" style="left:625.0px;top:271.0px" width="16" height="16"><rect x="2.7" y="2.7" width="10.6" height="10.6" rx="1.6" fill="none" stroke="#777" stroke-width="1.4"/></svg>
<svg class="b" style="left:625.0px;top:295.0px" width="16" height="16"><rect x="2.7" y="2.7" width="10.6" height="10.6" rx="1.6" fill="none" stroke="#777" stroke-width="1.4"/></svg>
<svg class="b" style="left:625.0px;top:319.0px" width="16" height="16"><rect x="2.7" y="2.7" width="10.6" height="10.6" rx="1.6" fill="none" stroke="#777" stroke-width="1.4"/></svg>
<svg class="b" style="left:623.45px;top:707.05px;" width="15.5" height="15.5" viewBox="0 0 24 24"><path fill="#c4c4c4" d="M19 3H5c-1.11 0-2 .9-2 2v14c0 1.1.89 2 2 2h14c1.11 0 2-.9 2-2V5c0-1.1-.89-2-2-2zm-9 14l-5-5 1.41-1.41L10 14.17l7.59-7.59L19 8l-9 9z"/></svg>
<svg class="b" style="left:623.45px;top:731.05px" width="15.5" height="15.5"><rect x="2.6" y="2.6" width="10.3" height="10.3" rx="1.6" fill="none" stroke="#c8c8c8" stroke-width="1.2"/></svg>
<svg class="b" style="left:677.8px;top:435.6px;" width="20" height="20" viewBox="0 0 24 24"><path fill="#eee" d="M19 9H2v2h17V9zm0-4H2v2h17V5zM2 15h13v-2H2v2zm15-2v6l5-3-5-3z"/></svg>
<svg class="b" style="left:786.0px;top:469.2px;" width="18" height="18" viewBox="0 0 24 24"><path fill="#eee" d="M20 12l-1.41-1.41L13 16.17V4h-2v12.17l-5.58-5.59L4 12l8 8 8-8z"/></svg>
<svg class="b" style="left:739.1px;top:497.5px;" width="24" height="24" viewBox="0 0 24 24"><path fill="#757575" d="M7 14l5-5 5 5z"/></svg>
<svg class="b" style="left:739.1px;top:530.0px;" width="24" height="24" viewBox="0 0 24 24"><path fill="#757575" d="M7 10l5 5 5-5z"/></svg>
<svg class="b" style="left:1642px;top:434px;" width="22" height="22" viewBox="0 0 22 22"><g fill="none" stroke="#eee" stroke-width="1.5"><rect x="2.7" y="2.9" width="11.3" height="10.8" rx="2.2"/><rect x="8" y="8.3" width="11.4" height="10.9" rx="2.2"/></g></svg>
<svg class="b" style="left:1677.75px;top:436.35px;" width="20.5" height="20.5" viewBox="0 0 24 24"><path fill="#eee" d="M4 20h16v2H4zM4 2h16v2H4zm9 7h3l-4-4-4 4h3v6H8l4 4 4-4h-3z"/></svg>
<svg class="b" style="left:1711.65px;top:436.05px;" width="20.5" height="20.5" viewBox="0 0 24 24"><path fill="#e4e4e4" d="M8 19h3v3h2v-3h3l-4-4-4 4zm8-15h-3V1h-2v3H8l4 4 4-4zM4 9.3v4.9h16V9.3H4z"/></svg>
<svg class="b" style="left:1745.15px;top:435.34999999999997px;" width="21.7" height="21.7" viewBox="0 0 24 24"><path fill="#eee" d="M19.14,12.94c0.04-0.3,0.06-0.61,0.06-0.94c0-0.32-0.02-0.64-0.07-0.94l2.03-1.58c0.18-0.14,0.23-0.41,0.12-0.61 l-1.92-3.32c-0.12-0.22-0.37-0.29-0.59-0.22l-2.39,0.96c-0.5-0.38-1.03-0.7-1.62-0.94L14.4,2.81c-0.04-0.24-0.24-0.41-0.48-0.41 h-3.84c-0.24,0-0.43,0.17-0.47,0.41L9.25,5.35C8.66,5.59,8.12,5.92,7.63,6.29L5.24,5.33c-0.22-0.08-0.47,0-0.59,0.22L2.74,8.87 C2.62,9.08,2.66,9.34,2.86,9.48l2.03,1.58C4.84,11.36,4.8,11.69,4.8,12s0.02,0.64,0.07,0.94l-2.03,1.58 c-0.18,0.14-0.23,0.41-0.12,0.61l1.92,3.32c0.12,0.22,0.37,0.29,0.59,0.22l2.39-0.96c0.5,0.38,1.03,0.7,1.62,0.94l0.36,2.54 c0.05,0.24,0.24,0.41,0.48,0.41h3.84c0.24,0,0.44-0.17,0.47-0.41l0.36-2.54c0.59-0.24,1.13-0.56,1.62-0.94l2.39,0.96 c0.22,0.08,0.47,0,0.59-0.22l1.92-3.32c0.12-0.22,0.07-0.47-0.12-0.61L19.14,12.94z M12,15.6c-1.98,0-3.6-1.62-3.6-3.6 s1.62-3.6,3.6-3.6s3.6,1.62,3.6,3.6S13.98,15.6,12,15.6z"/></svg>
<svg class="b" style="left:1779.0px;top:435.5px;" width="22" height="22" viewBox="0 0 24 24"><path fill="#eee" d="M16.59 8.59L12 13.17 7.41 8.59 6 10l6 6 6-6z"/></svg>
<svg class="b" style="left:682.5px;top:468.3px" width="19" height="19"><rect x="3.0" y="3.0" width="13" height="13" rx="2.5" fill="none" stroke="#3b8fae" stroke-width="2"/></svg>
<svg class="b" style="left:684.3px;top:498.5px" width="19" height="19"><rect x="2.95" y="2.95" width="13.1" height="13.1" rx="2.5" fill="none" stroke="#777" stroke-width="1.9"/></svg>
<svg class="b" style="left:684.3px;top:530.5px" width="19" height="19"><rect x="2.95" y="2.95" width="13.1" height="13.1" rx="2.5" fill="none" stroke="#777" stroke-width="1.9"/></svg>
<svg class="b" style="left:684.3px;top:562.2px" width="19" height="19"><rect x="2.95" y="2.95" width="13.1" height="13.1" rx="2.5" fill="none" stroke="#777" stroke-width="1.9"/></svg>
<svg class="b" style="left:684.3px;top:594.2px" width="19" height="19"><rect x="2.95" y="2.95" width="13.1" height="13.1" rx="2.5" fill="none" stroke="#777" stroke-width="1.9"/></svg>
<svg class="b" style="left:684.3px;top:626.2px" width="19" height="19"><rect x="2.95" y="2.95" width="13.1" height="13.1" rx="2.5" fill="none" stroke="#777" stroke-width="1.9"/></svg>
<svg class="b" style="left:684.3px;top:658.2px" width="19" height="19"><rect x="2.95" y="2.95" width="13.1" height="13.1" rx="2.5" fill="none" stroke="#777" stroke-width="1.9"/></svg>
<svg class="b" style="left:684.3px;top:690.2px" width="19" height="19"><rect x="2.95" y="2.95" width="13.1" height="13.1" rx="2.5" fill="none" stroke="#777" stroke-width="1.9"/></svg>
<svg class="b" style="left:2px;top:37px;" width="48" height="48" viewBox="0 0 48 48"><rect x="8" y="9" width="11.8" height="5.9" rx="2.95" fill="#e0e0e0"/>
<path fill="none" stroke="#e0e0e0" stroke-linecap="round" stroke-linejoin="round" stroke-width="1.9" stroke-linecap="butt" d="M19 11.9 H23.9 V36.4 M23 16.1 H28.6 M23 26 H28.6 M23 35.4 H28.6"/>
<rect x="31" y="13.8" width="8.9" height="4.6" rx="2.3" fill="#e0e0e0"/><rect x="31" y="23.7" width="8.9" height="4.6" rx="2.3" fill="#e0e0e0"/><rect x="31" y="33.4" width="8.9" height="4.6" rx="2.3" fill="#e0e0e0"/></svg>
<svg class="b" style="left:2px;top:87px;" width="48" height="48" viewBox="0 0 48 48"><path fill="none" stroke="#e0e0e0" stroke-linecap="round" stroke-linejoin="round" stroke-width="2.1" d="M18.9 16 V30.9 M18.9 16 Q20.5 23.5 28.5 26.8"/>
<circle cx="18.9" cy="16" r="3.1" fill="#e0e0e0"/><circle cx="18.9" cy="30.9" r="3.3" fill="#e0e0e0"/><circle cx="28.5" cy="26.8" r="3.3" fill="#e0e0e0"/></svg>
<svg class="b" style="left:2px;top:137px;" width="48" height="48" viewBox="0 0 48 48"><path fill="none" stroke="#e0e0e0" stroke-linecap="round" stroke-linejoin="round" stroke-width="2.3" d="M10.3 14.3 C22 14.3 24 31.2 39 31.2 M10.3 31.2 C22 31.2 24 14.3 39 14.3 M31.3 9 L39.6 14.3 L31.3 19.8 M31.3 25.8 L39.6 31.2 L31.3 36.5"/></svg>
<svg class="b" style="left:2px;top:187px;" width="48" height="48" viewBox="0 0 48 48"><path fill="none" stroke="#e0e0e0" stroke-linecap="round" stroke-linejoin="round" stroke-width="3" d="M30.5 13.8 Q23 12.6 16 13.6 L26.5 23 L16 32.6 Q23 33.6 30.5 32.4"/></svg>
<svg class="b" style="left:2px;top:237px;" width="48" height="48" viewBox="0 0 48 48"><path fill="none" stroke="#e0e0e0" stroke-linecap="round" stroke-linejoin="round" stroke-width="2.8" d="M25.5 14 Q19 12.7 12.6 13.6 L20.3 23.2 L12.3 32.6 Q19 33.6 26 32.4"/><path fill="none" stroke="#e0e0e0" stroke-linecap="round" stroke-linejoin="round" stroke-width="1.6" d="M28.8 24.3 H37.4 M33.1 20 V28.6"/></svg>
<svg class="b" style="left:2px;top:287px;" width="48" height="48" viewBox="0 0 48 48"><path fill="none" stroke="#e0e0e0" stroke-linecap="round" stroke-linejoin="round" stroke-width="1.8" d="M12 9.5 Q24 8 36.4 9.8 Q34 22 35 36.6 H12 Z"/><path d="M24.5 36 L26.5 33.2 H35 V36.6Z" fill="#e0e0e0"/>
<text x="23.4" y="26.6" font-family="Liberation Sans, sans-serif" font-size="11.5" fill="#e0e0e0" text-anchor="middle">2D</text></svg>
<svg class="b" style="left:2px;top:337px;" width="48" height="48" viewBox="0 0 48 48"><g fill="none" stroke="#e0e0e0" stroke-linecap="round" stroke-linejoin="round" stroke-width="1.5"><rect x="20" y="8.6" width="7.8" height="9.6" rx="1"/><rect x="9" y="29" width="7.4" height="9.6" rx="1"/><rect x="20.3" y="29" width="7.4" height="9.6" rx="1"/><rect x="31.6" y="29" width="7.4" height="9.6" rx="1"/><path d="M24 18.2 V29 M12.7 29 V24 H35.3 V29"/></g></svg>
<svg class="b" style="left:2px;top:387px;" width="48" height="48" viewBox="0 0 48 48"><g fill="none" stroke="#e0e0e0" stroke-linecap="round" stroke-linejoin="round" stroke-width="2.2"><path d="M12.2 14.6 Q16 10.5 19 10.3 Q22 11 26.2 16.3 L36.7 9"/><path d="M12.2 23.8 Q16 22.5 18 24.5 Q21 28.5 23 29 Q25 28.5 28 26 L36.2 23.6"/><path d="M12.2 36.4 H36"/></g></svg>
<svg class="b" style="left:2px;top:437px;" width="48" height="48" viewBox="0 0 48 48"><path fill="none" stroke="#e0e0e0" stroke-linecap="round" stroke-linejoin="round" stroke-width="1.7" d="M12.6 13.6 H19.6 C19.6 13.6 18.6 8.6 22.9 8.6 C27.2 8.6 26.2 13.6 26.2 13.6 H33.9 Q35.4 13.6 35.4 15.1 V20.8 C35.4 20.8 39.8 19.8 39.8 24.2 C39.8 28.6 35.4 27.6 35.4 27.6 V34.5 Q35.4 36 33.9 36 H26.2 C26.2 36 27.2 31.7 22.6 31.7 C18 31.7 19 36 19 36 H12.6 Q11.1 36 11.1 34.5 V27.6 C11.1 27.6 14.9 28.6 14.9 24.2 C14.9 19.8 11.1 20.8 11.1 20.8 V15.1 Q11.1 13.6 12.6 13.6 Z"/></svg>
<svg class="b" style="left:2px;top:487px;" width="48" height="48" viewBox="0 0 48 48"><circle cx="23.2" cy="16.4" r="5.6" fill="none" stroke="#e0e0e0" stroke-linecap="round" stroke-linejoin="round" stroke-width="1.7"/><path fill="none" stroke="#e0e0e0" stroke-linecap="round" stroke-linejoin="round" stroke-width="1.7" d="M22.5 33 H11.5 C11.5 27 17 23.9 23.2 23.9 C27 23.9 30.2 25.6 32.3 28.6"/><path fill="none" stroke="#e0e0e0" stroke-linecap="round" stroke-linejoin="round" stroke-width="3.1" stroke-linecap="butt" d="M27.2 32.6 L31.3 37.8 L39.4 29.8"/></svg>
<svg class="b" style="left:2px;top:537px;" width="48" height="48" viewBox="0 0 48 48"><path fill="none" stroke="#e0e0e0" stroke-linecap="round" stroke-linejoin="round" stroke-width="1.8" d="M12.6 34.4 L8.6 14.5 Q8.4 13 10 13 H18.5 L21.2 16.6 H31.5 Q33 16.6 33 18 V25 M12.6 34.4 H34.5 Q36 34.4 36.6 33 L39.6 26.2 Q40 25 38.5 25 H33"/><path fill="none" stroke="#e0e0e0" stroke-linecap="round" stroke-linejoin="round" stroke-width="1.8" d="M36 29 H21.5 M26.5 24.3 L21.5 29 L26.5 33.5"/></svg>
<svg class="b" style="left:2px;top:587px;" width="48" height="48" viewBox="0 0 48 48"><circle cx="18.8" cy="15.6" r="5.5" fill="none" stroke="#e0e0e0" stroke-linecap="round" stroke-linejoin="round" stroke-width="1.7"/><path fill="none" stroke="#e0e0e0" stroke-linecap="round" stroke-linejoin="round" stroke-width="1.7" d="M25.5 30.3 H8.3 C8.3 25 13 22.6 18.8 22.6 C23 22.6 26 24 28 26.4"/><path fill="none" stroke="#e0e0e0" stroke-linecap="round" stroke-linejoin="round" stroke-width="1.6" d="M32.3 38.8 C28.5 34.5 26.8 32 26.8 29.3 A5.5 5.5 0 0 1 37.8 29.3 C37.8 32 36.1 34.5 32.3 38.8Z"/><circle cx="32.3" cy="29.4" r="2" fill="#e0e0e0"/></svg>
<svg class="b" style="left:2px;top:637px;" width="48" height="48" viewBox="0 0 48 48"><circle cx="23.7" cy="22.1" r="13" fill="none" stroke="#e0e0e0" stroke-linecap="round" stroke-linejoin="round" stroke-width="2"/><path fill="none" stroke="#e0e0e0" stroke-linecap="round" stroke-linejoin="round" stroke-width="2" d="M9 38.8 H38.4 M23.7 35.2 V38.8"/><path d="M21.4 27.2 L25.8 15.6 L24.8 27.6 Q23 29 21.4 27.2Z" fill="#e0e0e0"/><path d="M15.6 22 A8.4 8.4 0 0 1 32 21" fill="none" stroke="#e0e0e0" stroke-linecap="round" stroke-linejoin="round" stroke-width="1" stroke-dasharray="0.6 1.6"/></svg>
<svg class="b" style="left:1822px;top:43px;" width="36" height="36" viewBox="0 0 36 36"><path fill="none" stroke="#e0e0e0" stroke-linecap="round" stroke-linejoin="round" stroke-width="1.4" d="M15 23.1 H11.2 A4.6 4.6 0 1 1 13.4 14.5 A5.3 5.3 0 1 1 23.4 14.5 A4.6 4.6 0 1 1 25.6 23.1 H22"/><path fill="none" stroke="#e0e0e0" stroke-linecap="round" stroke-linejoin="round" stroke-width="1.3" d="M18.4 12.6 V29 M18.4 20.9 L13.6 17 M18.4 23 L22.8 19.7"/></svg>
<svg class="b" style="left:1822px;top:87px;" width="36" height="36" viewBox="0 0 36 36"><path fill="none" stroke="#e0e0e0" stroke-linecap="butt" stroke-linejoin="miter" stroke-width="1.1" d="M28.6 13.2 V5.7 H5.2 V22.6 H13.2 V25.2 H10.2"/><path fill="none" stroke="#e0e0e0" stroke-linecap="butt" stroke-linejoin="miter" stroke-width="1.2" d="M15.1 19 V14.2 H20 M26 14.2 H30.8 V19 M30.8 26 V30.7 H26 M20 30.7 H15.1 V26"/><path d="M23.1 17.7 L27.3 20.1 V25 L23.1 27.5 L18.9 25 V20.1Z" fill="#dcdcdc"/></svg>
<svg class="b" style="left:1822px;top:136px;" width="36" height="36" viewBox="0 0 36 36"><rect x="5.8" y="13.5" width="24.8" height="8" fill="none" stroke="#e0e0e0" stroke-linecap="butt" stroke-linejoin="miter" stroke-width="1.2"/><rect x="5.2" y="22.9" width="25.8" height="2" fill="#e0e0e0"/><path fill="none" stroke="#e0e0e0" stroke-linecap="butt" stroke-linejoin="miter" stroke-width="1.2" d="M9.2 21.5 V17.5 M12 21.5 V19 M14.8 21.5 V17.5 M17.6 21.5 V19 M20.4 21.5 V17.5 M23.2 21.5 V19 M26 21.5 V17.5 M28.4 21.5 V19"/></svg>
<svg class="b" style="left:1822px;top:180px;" width="36" height="36" viewBox="0 0 36 36"><path fill="none" stroke="#e0e0e0" stroke-linecap="butt" stroke-linejoin="miter" stroke-width="1.1" d="M4.8 20.5 L12.5 13.9 H31 L23.3 20.5Z"/><path d="M13.2 12.8 L22.8 4 V23.6 L13.2 32.1Z" fill="#dcdcdc"/><path d="M13.2 20.5 H22.8 M14 13.9 H22.8" stroke="#bcbcbc" stroke-width="0.8" fill="none"/></svg>
<svg class="b" style="left:1822px;top:224px;" width="36" height="36" viewBox="0 0 36 36"><path fill="none" stroke="#e0e0e0" stroke-linecap="butt" stroke-linejoin="miter" stroke-width="1.1" d="M6.3 12.3 H22.8 V28.8 H6.3Z M13.4 7 H30 V23.5 H13.4Z M6.3 12.3 L13.4 7 M22.8 12.3 L30 7 M22.8 28.8 L30 23.5 M6.3 28.8 L13.4 23.5"/><path d="M15.6 12.6 L20.7 7.4 V24.2 L15.6 28.8Z" fill="#dcdcdc"/></svg>
<svg class="b" style="left:1822px;top:268px;" width="36" height="36" viewBox="0 0 36 36"><path fill="none" stroke="#e0e0e0" stroke-linecap="butt" stroke-linejoin="miter" stroke-width="1.2" d="M8.8 7.2 H30 V27 H4.8 V11.2 Z M4.8 11.2 H8.8 V7.2"/><rect x="29.2" y="7.8" width="2.4" height="20.8" fill="#e0e0e0"/><rect x="6.2" y="26.4" width="25.4" height="2.3" fill="#e0e0e0"/><path fill="none" stroke="#e0e0e0" stroke-linecap="butt" stroke-linejoin="miter" stroke-width="1.1" stroke-dasharray="2.4 1.1" d="M16.2 7.2 V26.6 M4.8 15.9 H29.6"/><path fill="none" stroke="#e0e0e0" stroke-linecap="butt" stroke-linejoin="miter" stroke-width="1.2" d="M22.8 26.4 V24.2 H29.4"/></svg>
<svg class="b" style="left:1827.8px;top:318.0px;" width="24" height="24" viewBox="0 0 24 24"><path fill="#e0e0e0" d="M12 8c-2.21 0-4 1.79-4 4s1.79 4 4 4 4-1.79 4-4-1.79-4-4-4zm8.94 3c-.46-4.17-3.77-7.48-7.94-7.94V1h-2v2.06C6.83 3.52 3.52 6.83 3.06 11H1v2h2.06c.46 4.17 3.77 7.48 7.94 7.94V23h2v-2.06c4.17-.46 7.48-3.77 7.94-7.94H23v-2h-2.06zM12 19c-3.87 0-7-3.13-7-7s3.13-7 7-7 7 3.13 7 7-3.13 7-7 7z"/></svg>
<svg class="b" style="left:1822px;top:356px;" width="36" height="36" viewBox="0 0 36 36"><circle cx="17.8" cy="17.9" r="12.4" fill="none" stroke="#e0e0e0" stroke-linecap="round" stroke-linejoin="round" stroke-width="1"/><path fill="none" stroke="#e0e0e0" stroke-linecap="butt" stroke-linejoin="miter" stroke-width="1.1" d="M12.3 24.8 V12 Q15 10.6 18.6 12 T25.4 13 V20 Q22 21 18.6 19.6 T12.3 18.6"/></svg>
<svg class="b" style="left:1822px;top:405px;" width="36" height="36" viewBox="0 0 36 36"><path fill="none" stroke="#e0e0e0" stroke-linecap="round" stroke-linejoin="round" stroke-width="1" d="M3.3 22.2 L33 4.9 M3.3 31.8 L33 15.6 M4.1 16.4 L22.5 27.4 M12.9 10.1 L31.1 20.5"/><text x="4.4" y="16" font-family="Liberation Sans, sans-serif" font-size="6.5" fill="#e0e0e0" text-anchor="middle">1</text><text x="14.3" y="9.7" font-family="Liberation Sans, sans-serif" font-size="6.5" fill="#e0e0e0" text-anchor="middle">2</text></svg>
<svg class="b" style="left:1822px;top:454px;" width="36" height="36" viewBox="0 0 36 36"><path fill="none" stroke="#e0e0e0" stroke-linecap="butt" stroke-linejoin="miter" stroke-width="1.2" stroke-dasharray="1.9 1.257" d="M5.4 6.2 H30.6 M30 5.6 V30.4 M30.6 29.8 H5.4 M6 30.4 V5.6"/><path fill="none" stroke="#e0e0e0" stroke-linecap="round" stroke-linejoin="round" stroke-width="1" d="M17.8 11 L23.9 14.5 V21.5 L17.8 25 L11.7 21.5 V14.5Z M11.7 14.5 L17.8 18 L23.9 14.5"/><path fill="none" stroke="#e0e0e0" stroke-linecap="butt" stroke-linejoin="miter" stroke-width="1.5" d="M17.8 18 V25"/></svg>
<svg class="b" style="left:1822px;top:498px;" width="36" height="36" viewBox="0 0 36 36"><path fill="none" stroke="#e0e0e0" stroke-linecap="butt" stroke-linejoin="miter" stroke-width="1.2" stroke-dasharray="1.9 1.257" d="M5.4 6.2 H30.6 M30 5.6 V30.4 M30.6 29.8 H5.4 M6 30.4 V5.6"/><g transform="translate(10.3,10.2) scale(0.63)"><path fill="#e0e0e0" d="M12 4.5C7 4.5 2.73 7.61 1 12c1.73 4.39 6 7.5 11 7.5s9.27-3.11 11-7.5c-1.73-4.39-6-7.5-11-7.5zM12 17c-2.76 0-5-2.24-5-5s2.24-5 5-5 5 2.24 5 5-2.24 5-5 5zm0-8c-1.66 0-3 1.34-3 3s1.34 3 3 3 3-1.34 3-3-1.34-3-3-3z"/></g></svg>
<svg class="b" style="left:1822px;top:542px;" width="36" height="36" viewBox="0 0 36 36"><path fill="none" stroke="#e0e0e0" stroke-linecap="butt" stroke-linejoin="miter" stroke-width="1.2" stroke-dasharray="1.9 1.257" d="M5.4 6.2 H30.6 M30 5.6 V30.4 M30.6 29.8 H5.4 M6 30.4 V5.6"/><g transform="translate(9.9,9.8) scale(0.67)"><path fill="#e0e0e0" d="M12 7c2.76 0 5 2.24 5 5 0 .65-.13 1.26-.36 1.83l2.92 2.92c1.51-1.26 2.7-2.89 3.43-4.75-1.73-4.39-6-7.5-11-7.5-1.4 0-2.74.25-3.98.7l2.16 2.16C10.74 7.13 11.35 7 12 7zM2 4.27l2.28 2.28.46.46C3.08 8.3 1.78 10.02 1 12c1.73 4.39 6 7.5 11 7.5 1.55 0 3.03-.3 4.38-.84l.42.42L19.73 22 21 20.73 3.27 3 2 4.27zM7.53 9.8l1.55 1.55c-.05.21-.08.43-.08.65 0 1.66 1.34 3 3 3 .22 0 .44-.03.65-.08l1.55 1.55c-.67.33-1.41.53-2.2.53-2.76 0-5-2.24-5-5 0-.79.2-1.53.53-2.2zm4.31-.78l3.15 3.15.02-.16c0-1.66-1.34-3-3-3l-.17.01z"/></g></svg>
<svg class="b" style="left:1822px;top:586px;" width="36" height="36" viewBox="0 0 36 36"><path fill="none" stroke="#e0e0e0" stroke-linecap="butt" stroke-linejoin="miter" stroke-width="1.2" stroke-dasharray="1.9 1.257" d="M5.4 6.2 H30.6 M30 5.6 V30.4 M30.6 29.8 H5.4 M6 30.4 V5.6"/><rect x="16" y="16.2" width="15.9" height="15.5" fill="#dcdcdc"/><path d="M19.6 19.6 L28.4 28.4 M28.4 19.6 L19.6 28.4" stroke="#444" stroke-width="1.2" fill="none"/></svg>
<svg class="b" style="left:1824px;top:637px;" width="32" height="32" viewBox="0 0 32 32"><path d="M4.3 6.8 L15.8 10.6 V28.3 L5.9 20.5Z" fill="#dedede"/><path d="M15.8 10.6 L27.4 6.8 L26 20.5 L15.8 28.3Z" fill="#7a7a7a"/><path d="M4.3 6.8 L15.8 4 L27.4 6.8 L15.8 10.6Z" fill="#727272"/><path d="M4.3 6.8 L15.8 4 L27.4 6.8 L26 20.5 L15.8 28.3 L5.9 20.5Z M15.8 10.6 L27.4 6.8 M15.8 10.6 V28.3 M4.3 6.8 L15.8 10.6" fill="none" stroke="#dedede" stroke-width="1.3" stroke-linejoin="round"/></svg>
<svg class="b" style="left:1824px;top:681px;" width="32" height="32" viewBox="0 0 32 32"><g fill="none" stroke="#dedede"><ellipse cx="16" cy="15.7" rx="11.1" ry="4.7" stroke-width="1.8"/><ellipse cx="16" cy="15.7" rx="4.9" ry="9.9" stroke-width="1.8"/><path d="M16 13.5 V16.2 L13.4 19 M16 16.2 L19.4 19" stroke-width="0.8"/></g></svg>
<svg class="b" style="left:1823px;top:803px;" width="6" height="6" viewBox="0 0 6 6"><path d="M0.8 0.8 V5 H5Z" fill="#f4f4f4"/></svg>
<svg class="b" style="left:666px;top:37px;" width="32" height="32" viewBox="0 0 32 32"><path fill="none" stroke="#e8e8e8" stroke-width="1.2" d="M4.6 11.5 V4.6 H11.5 M20.5 4.6 H27.4 V11.5 M27.4 20.5 V27.4 H20.5 M11.5 27.4 H4.6 V20.5"/><path d="M16 9.2 L21.9 12.6 V19.4 L16 22.8 L10.1 19.4 V12.6Z" fill="#dedede"/></svg>
<svg class="b" style="left:666px;top:244px;" width="100" height="100" viewBox="0 0 100 100"><circle cx="50" cy="51" r="47" fill="#322e2d"/>
<path d="M50 51 V28" stroke="#0000e6" stroke-width="1.3"/><path d="M50 22.5 L47.8 29 H52.2Z" fill="#0000e6"/>
<path d="M50 50 H28" stroke="#e60000" stroke-width="1.3"/><path d="M22.5 50 L28.5 47.9 V52.1Z" fill="#e60000"/><circle cx="30" cy="50" r="1.3" fill="#e60000"/>
<path d="M47 48.5 L52 47.2 L53.5 50 L52 54.5 L47.8 54.8Z" fill="#00dc1e"/><path d="M47.5 48 L52 47 L53 49Z" fill="#9a9a9a"/>
<text x="53" y="18.6" font-family="Liberation Sans, sans-serif" font-size="10" font-weight="700" fill="#0000e6" text-anchor="middle">Z</text>
<text x="20" y="50.5" font-family="Liberation Sans, sans-serif" font-size="7.5" font-weight="700" fill="#e60000" text-anchor="middle">x</text></svg>
<svg class="b" style="left:1700px;top:70px;" width="100" height="90" viewBox="0 0 100 90"><path d="M13 13.5 L79.3 14 L77.2 77.5 L15 76.5Z" fill="#fff"/><path d="M13 13.5 L79.3 14 L77.2 77.5 L15 76.5Z" fill="none" stroke="#2c2827" stroke-width="0.8"/>
<text x="46.6" y="54.3" font-family="Liberation Sans, sans-serif" font-size="23.5" fill="#3a3a3a" text-anchor="middle" textLength="37.8" lengthAdjust="spacingAndGlyphs">Сзади</text></svg>
<svg class="b" style="left:930px;top:180px;" width="455" height="205" viewBox="930 180 455 205"><polygon points="973.1,343.5 975.3,343.5 976.5,366.0 974.3,366.0" fill="#7c7c7c"/><polygon points="973.6,343.5 974.7,343.5 975.9,366.0 974.8,366.0" fill="#ececec"/><polygon points="982.9,343.5 985.1,343.5 986.3,353.0 984.1,353.0" fill="#7c7c7c"/><polygon points="983.4,343.5 984.5,343.5 985.7,353.0 984.6,353.0" fill="#ececec"/><polygon points="1007.3,343.5 1009.5,343.5 1010.7,368.0 1008.5,368.0" fill="#7c7c7c"/><polygon points="1007.8,343.5 1008.9,343.5 1010.1,368.0 1009.0,368.0" fill="#ececec"/><polygon points="1009.9,343.5 1012.1,343.5 1013.3,360.0 1011.1,360.0" fill="#7c7c7c"/><polygon points="1010.4,343.5 1011.5,343.5 1012.7,360.0 1011.6,360.0" fill="#ececec"/><polygon points="1021.9,343.5 1024.1,343.5 1025.3,356.0 1023.1,356.0" fill="#7c7c7c"/><polygon points="1022.4,343.5 1023.5,343.5 1024.7,356.0 1023.6,356.0" fill="#ececec"/><polygon points="1074.7,343.5 1076.9,343.5 1078.1,368.0 1075.9,368.0" fill="#7c7c7c"/><polygon points="1075.2,343.5 1076.3,343.5 1077.5,368.0 1076.4,368.0" fill="#ececec"/><polygon points="1079.6,343.5 1081.8,343.5 1083.0,361.0 1080.8,361.0" fill="#7c7c7c"/><polygon points="1080.1,343.5 1081.2,343.5 1082.4,361.0 1081.3,361.0" fill="#ececec"/><polygon points="1063.9,343.5 1066.1,343.5 1067.3,349.0 1065.1,349.0" fill="#7c7c7c"/><polygon points="1064.4,343.5 1065.5,343.5 1066.7,349.0 1065.6,349.0" fill="#ececec"/><polygon points="1088.9,343.5 1091.1,343.5 1092.3,349.0 1090.1,349.0" fill="#7c7c7c"/><polygon points="1089.4,343.5 1090.5,343.5 1091.7,349.0 1090.6,349.0" fill="#ececec"/><polygon points="951.9,343.8 954.9,343.8 957.9,372.5 954.9,372.5" fill="#7c7c7c"/><polygon points="952.6,343.8 954.1,343.8 957.1,372.5 955.6,372.5" fill="#ececec"/><polygon points="963.5,343.8 966.5,343.8 969.4,372.8 966.4,372.8" fill="#7c7c7c"/><polygon points="964.2,343.8 965.7,343.8 968.5,372.8 967.0,372.8" fill="#ececec"/><polygon points="975.1,343.8 978.1,343.8 980.8,373.1 977.8,373.1" fill="#7c7c7c"/><polygon points="975.8,343.8 977.3,343.8 980.0,373.1 978.5,373.1" fill="#ececec"/><polygon points="987.4,343.8 990.4,343.8 992.9,373.4 989.9,373.4" fill="#7c7c7c"/><polygon points="988.1,343.8 989.6,343.8 992.1,373.4 990.6,373.4" fill="#ececec"/><polygon points="999.6,343.8 1002.6,343.8 1005.0,373.7 1002.0,373.7" fill="#7c7c7c"/><polygon points="1000.3,343.8 1001.8,343.8 1004.2,373.7 1002.7,373.7" fill="#ececec"/><polygon points="1013.1,343.8 1016.1,343.8 1018.4,374.0 1015.4,374.0" fill="#7c7c7c"/><polygon points="1013.8,343.8 1015.3,343.8 1017.5,374.0 1016.0,374.0" fill="#ececec"/><polygon points="1027.1,343.8 1030.1,343.8 1032.2,374.4 1029.2,374.4" fill="#7c7c7c"/><polygon points="1027.8,343.8 1029.3,343.8 1031.4,374.4 1029.9,374.4" fill="#ececec"/><polygon points="1040.6,343.8 1043.6,343.8 1045.5,374.7 1042.5,374.7" fill="#7c7c7c"/><polygon points="1041.3,343.8 1042.8,343.8 1044.7,374.7 1043.2,374.7" fill="#ececec"/><polygon points="1054.1,343.8 1057.1,343.8 1058.9,375.0 1055.9,375.0" fill="#7c7c7c"/><polygon points="1054.8,343.8 1056.3,343.8 1058.1,375.0 1056.6,375.0" fill="#ececec"/><polygon points="1068.1,343.8 1071.1,343.8 1072.8,375.3 1069.8,375.3" fill="#7c7c7c"/><polygon points="1068.8,343.8 1070.3,343.8 1071.9,375.3 1070.4,375.3" fill="#ececec"/><polygon points="1082.2,343.8 1085.2,343.8 1086.7,375.6 1083.7,375.6" fill="#7c7c7c"/><polygon points="1082.9,343.8 1084.4,343.8 1085.9,375.6 1084.4,375.6" fill="#ececec"/><polygon points="1096.9,343.8 1099.9,343.8 1101.2,375.9 1098.2,375.9" fill="#7c7c7c"/><polygon points="1097.6,343.8 1099.1,343.8 1100.4,375.9 1098.9,375.9" fill="#ececec"/><polygon points="1111.6,343.8 1114.6,343.8 1115.8,376.2 1112.8,376.2" fill="#7c7c7c"/><polygon points="1112.3,343.8 1113.8,343.8 1115.0,376.2 1113.5,376.2" fill="#ececec"/><rect x="1199.9" y="347.0" width="3.0" height="31.5" fill="#7c7c7c"/><rect x="1200.6" y="347.0" width="1.5" height="31.5" fill="#ececec"/><rect x="1214.0" y="347.0" width="3.0" height="31.5" fill="#7c7c7c"/><rect x="1214.7" y="347.0" width="1.5" height="31.5" fill="#ececec"/><rect x="1228.2" y="347.0" width="3.0" height="31.5" fill="#7c7c7c"/><rect x="1228.9" y="347.0" width="1.5" height="31.5" fill="#ececec"/><rect x="1243.1" y="347.0" width="3.0" height="31.5" fill="#7c7c7c"/><rect x="1243.8" y="347.0" width="1.5" height="31.5" fill="#ececec"/><rect x="1257.8" y="347.0" width="3.0" height="31.5" fill="#7c7c7c"/><rect x="1258.5" y="347.0" width="1.5" height="31.5" fill="#ececec"/><rect x="1271.4" y="347.0" width="3.0" height="31.5" fill="#7c7c7c"/><rect x="1272.1" y="347.0" width="1.5" height="31.5" fill="#ececec"/><rect x="1286.0" y="347.0" width="3.0" height="31.5" fill="#7c7c7c"/><rect x="1286.7" y="347.0" width="1.5" height="31.5" fill="#ececec"/><rect x="1300.2" y="347.0" width="3.0" height="31.5" fill="#7c7c7c"/><rect x="1300.9" y="347.0" width="1.5" height="31.5" fill="#ececec"/><rect x="1313.0" y="347.0" width="3.0" height="31.5" fill="#7c7c7c"/><rect x="1313.7" y="347.0" width="1.5" height="31.5" fill="#ececec"/><rect x="1325.9" y="347.0" width="3.0" height="31.5" fill="#7c7c7c"/><rect x="1326.6" y="347.0" width="1.5" height="31.5" fill="#ececec"/><rect x="1339.2" y="347.0" width="3.0" height="31.5" fill="#7c7c7c"/><rect x="1339.9" y="347.0" width="1.5" height="31.5" fill="#ececec"/><rect x="1351.5" y="347.0" width="3.0" height="31.5" fill="#7c7c7c"/><rect x="1352.2" y="347.0" width="1.5" height="31.5" fill="#ececec"/><rect x="1363.9" y="347.0" width="3.0" height="31.5" fill="#7c7c7c"/><rect x="1364.6" y="347.0" width="1.5" height="31.5" fill="#ececec"/><rect x="1254.5" y="347.0" width="2.0" height="4.0" fill="#7c7c7c"/><rect x="1254.9" y="347.0" width="1.0" height="4.0" fill="#ececec"/><rect x="1266.0" y="347.0" width="2.0" height="4.0" fill="#7c7c7c"/><rect x="1266.4" y="347.0" width="1.0" height="4.0" fill="#ececec"/><rect x="1279.0" y="347.0" width="2.0" height="5.0" fill="#7c7c7c"/><rect x="1279.4" y="347.0" width="1.0" height="5.0" fill="#ececec"/><rect x="1291.0" y="347.0" width="2.0" height="4.0" fill="#7c7c7c"/><rect x="1291.4" y="347.0" width="1.0" height="4.0" fill="#ececec"/><rect x="1306.5" y="347.0" width="2.0" height="10.0" fill="#7c7c7c"/><rect x="1306.9" y="347.0" width="1.0" height="10.0" fill="#ececec"/><rect x="1310.0" y="347.0" width="2.0" height="17.0" fill="#7c7c7c"/><rect x="1310.4" y="347.0" width="1.0" height="17.0" fill="#ececec"/><rect x="1348.0" y="347.0" width="2.0" height="9.0" fill="#7c7c7c"/><rect x="1348.4" y="347.0" width="1.0" height="9.0" fill="#ececec"/><rect x="1354.2" y="347.0" width="2.0" height="23.0" fill="#7c7c7c"/><rect x="1354.6" y="347.0" width="1.0" height="23.0" fill="#ececec"/><rect x="1358.5" y="347.0" width="2.0" height="25.0" fill="#7c7c7c"/><rect x="1358.9" y="347.0" width="1.0" height="25.0" fill="#ececec"/><rect x="1116.6" y="343.7" width="2.0" height="25.8" fill="#7c7c7c"/><rect x="1117.0" y="343.7" width="1.0" height="25.8" fill="#ececec"/><rect x="1120.3" y="342.5" width="2.0" height="18.5" fill="#7c7c7c"/><rect x="1120.7" y="342.5" width="1.0" height="18.5" fill="#ececec"/><rect x="1124.6" y="341.0" width="2.0" height="14.0" fill="#7c7c7c"/><rect x="1125.0" y="341.0" width="1.0" height="14.0" fill="#ececec"/><rect x="1128.9" y="339.0" width="2.0" height="8.5" fill="#7c7c7c"/><rect x="1129.3" y="339.0" width="1.0" height="8.5" fill="#ececec"/><rect x="1133.2" y="318.0" width="2.0" height="18.4" fill="#7c7c7c"/><rect x="1133.6" y="318.0" width="1.0" height="18.4" fill="#ececec"/><rect x="1136.5" y="316.0" width="2.0" height="16.0" fill="#7c7c7c"/><rect x="1136.9" y="316.0" width="1.0" height="16.0" fill="#ececec"/><rect x="1166.3" y="318.7" width="1.8" height="27.3" fill="#7c7c7c"/><rect x="1166.7" y="318.7" width="0.9" height="27.3" fill="#ececec"/><rect x="1172.5" y="300.0" width="1.6" height="38.0" fill="#7c7c7c"/><rect x="1172.9" y="300.0" width="0.8" height="38.0" fill="#ececec"/><rect x="1162.9" y="296.6" width="7.4" height="6.0" fill="#3e4149"/><rect x="1163.5" y="302.0" width="6.8" height="13.6" fill="#f4f4f4"/><rect x="1162.3" y="315.6" width="9.6" height="3.0" fill="#bdbdbd"/><rect x="1150.6" y="345.0" width="2.6" height="31.8" fill="#7c7c7c"/><rect x="1151.2" y="345.0" width="1.3" height="31.8" fill="#ececec"/><rect x="1159.2" y="345.0" width="2.6" height="31.8" fill="#7c7c7c"/><rect x="1159.8" y="345.0" width="1.3" height="31.8" fill="#ececec"/><rect x="1151.5" y="296.6" width="7.4" height="28.4" fill="#3e4149"/><rect x="1151.9" y="324.8" width="8.6" height="15.4" fill="#f6f6f6"/><rect x="1148.9" y="340.0" width="14.1" height="5.0" fill="#c9c9c9"/><polygon points="1113.4,296.6 1145.0,296.6 1143.0,308.0 1127.0,322.0 1124.0,340.0 1114.6,342.0" fill="#4a4c52"/><polygon points="1121.0,310.0 1139.0,303.0 1141.0,311.0 1135.0,316.0 1122.0,318.0" fill="#6e6e6e"/><rect x="1134.0" y="311.0" width="6.0" height="4.5" fill="#efefef"/><rect x="1115.5" y="330.0" width="9.0" height="8.0" fill="#1e1e22"/><rect x="1116.0" y="331.0" width="5.0" height="2.2" fill="#f2f2f2"/><rect x="1116.0" y="335.6" width="7.0" height="1.6" fill="#dcdcdc"/><path d="M1116.5 319.0 L1130.0 314.0" stroke="#cfcfcf" stroke-width="0.8" fill="none"/><path d="M1116.5 321.4 L1128.5 316.4" stroke="#8c8c8c" stroke-width="0.8" fill="none"/><path d="M1116.5 323.8 L1127.0 318.8" stroke="#cfcfcf" stroke-width="0.8" fill="none"/><path d="M1116.5 326.2 L1125.5 321.2" stroke="#8c8c8c" stroke-width="0.8" fill="none"/><path d="M1116.5 328.6 L1124.0 323.6" stroke="#cfcfcf" stroke-width="0.8" fill="none"/><path d="M1143.0 298.0 L1146.5 312.0" stroke="#bdbdbd" stroke-width="1.1" fill="none"/><path d="M1146.0 297.0 L1147.0 306.0" stroke="#8e8ed0" stroke-width="0.8" fill="none"/><polygon points="1113.4,296.6 1132.0,296.6 1113.4,320.5" fill="#cb6a4b" stroke="#1f1918" stroke-width="0.5" stroke-linejoin="round"/><polygon points="1113.4,296.6 1121.0,296.6 1113.4,309.0" fill="#fa8b5a"/><polygon points="939.8,226.4 987.8,217.4 988.5,225.0" fill="#f29068" stroke="#1f1918" stroke-width="0.9" stroke-linejoin="round"/><polygon points="939.8,226.4 990.0,224.8 991.0,321.0 947.5,319.0" fill="#fa8b5a" stroke="#1f1918" stroke-width="0.9" stroke-linejoin="round"/><polygon points="1325.3,209.7 1375.0,229.0 1322.0,227.7" fill="#f29068" stroke="#1f1918" stroke-width="0.9" stroke-linejoin="round"/><polygon points="1325.8,217.2 1340.5,225.4 1325.8,225.4" fill="#b9bfdc" stroke="#1f1918" stroke-width="0.4" stroke-linejoin="round"/><polygon points="986.0,191.7 1048.3,185.8 1306.8,186.6 1325.3,192.5" fill="#fa8b5a" stroke="#1f1918" stroke-width="0.9" stroke-linejoin="round"/><polygon points="988.0,191.7 1048.3,185.8 1050.0,191.8" fill="#e27a5c" stroke="#1f1918" stroke-width="0.5" stroke-linejoin="round"/><path d="M1100.0 186.0 L1100.0 192.0" stroke="#1f1918" stroke-width="0.6" fill="none"/><polygon points="986.0,191.7 1325.3,192.5 1323.0,240.0 1322.0,322.0 1197.6,322.0 1197.6,297.0 1115.0,297.0 1115.0,321.0 991.0,321.0 991.7,238.0" fill="#fa8b5a" stroke="#1f1918" stroke-width="0.9" stroke-linejoin="round"/><path d="M989.0 192.0 L989.0 225.0" stroke="#1f1918" stroke-width="0.5" fill="none"/><path d="M1322.5 193.0 L1321.0 228.0" stroke="#1f1918" stroke-width="0.5" fill="none"/><path d="M992.0 238.5 L1322.0 240.5" stroke="#1f1918" stroke-width="0.5" fill="none"/><path d="M940.5 240.0 L991.0 238.5" stroke="#1f1918" stroke-width="0.4" fill="none"/><path d="M1322.0 240.5 L1374.5 241.5" stroke="#1f1918" stroke-width="0.4" fill="none"/><rect x="1065.5" y="193.0" width="15.7" height="128.0" fill="#3e4149" stroke="#1f1918" stroke-width="0.4"/><rect x="1065.5" y="217.4" width="15.7" height="23.0" fill="#17181c"/><rect x="1067.2" y="219.1" width="5.3" height="8.9" fill="#c6b2af"/><rect x="1074.2" y="219.1" width="5.3" height="8.9" fill="#c6b2af"/><rect x="1067.2" y="229.8" width="5.3" height="8.9" fill="#c6b2af"/><rect x="1074.2" y="229.8" width="5.3" height="8.9" fill="#c6b2af"/><rect x="1086.8" y="193.0" width="15.4" height="128.0" fill="#3e4149" stroke="#1f1918" stroke-width="0.4"/><rect x="1086.8" y="217.4" width="15.4" height="23.0" fill="#17181c"/><rect x="1088.5" y="219.1" width="5.2" height="8.9" fill="#c6b2af"/><rect x="1095.4" y="219.1" width="5.2" height="8.9" fill="#c6b2af"/><rect x="1088.5" y="229.8" width="5.2" height="8.9" fill="#c6b2af"/><rect x="1095.4" y="229.8" width="5.2" height="8.9" fill="#c6b2af"/><rect x="1110.0" y="193.0" width="15.9" height="104.0" fill="#3e4149" stroke="#1f1918" stroke-width="0.4"/><rect x="1110.0" y="217.4" width="15.9" height="23.0" fill="#17181c"/><rect x="1111.7" y="219.1" width="5.4" height="8.9" fill="#c6b2af"/><rect x="1118.8" y="219.1" width="5.4" height="8.9" fill="#c6b2af"/><rect x="1111.7" y="229.8" width="5.4" height="8.9" fill="#c6b2af"/><rect x="1118.8" y="229.8" width="5.4" height="8.9" fill="#c6b2af"/><rect x="1110.0" y="266.5" width="15.9" height="23.0" fill="#17181c"/><rect x="1111.7" y="272.2" width="5.4" height="7.0" fill="#9395a8"/><rect x="1118.8" y="272.2" width="5.4" height="7.0" fill="#9395a8"/><rect x="1111.7" y="280.8" width="5.4" height="7.0" fill="#9395a8"/><rect x="1118.8" y="280.8" width="5.4" height="7.0" fill="#9395a8"/><rect x="1133.0" y="193.0" width="15.5" height="104.0" fill="#3e4149" stroke="#1f1918" stroke-width="0.4"/><rect x="1133.0" y="217.4" width="15.5" height="23.0" fill="#17181c"/><rect x="1134.7" y="219.1" width="5.2" height="8.9" fill="#c6b2af"/><rect x="1141.6" y="219.1" width="5.2" height="8.9" fill="#c6b2af"/><rect x="1134.7" y="229.8" width="5.2" height="8.9" fill="#c6b2af"/><rect x="1141.6" y="229.8" width="5.2" height="8.9" fill="#c6b2af"/><rect x="1133.0" y="266.5" width="15.5" height="23.0" fill="#17181c"/><rect x="1134.7" y="272.2" width="5.2" height="7.0" fill="#9395a8"/><rect x="1141.6" y="272.2" width="5.2" height="7.0" fill="#9395a8"/><rect x="1134.7" y="280.8" width="5.2" height="7.0" fill="#9395a8"/><rect x="1141.6" y="280.8" width="5.2" height="7.0" fill="#9395a8"/><rect x="1158.5" y="193.0" width="15.9" height="104.0" fill="#3e4149" stroke="#1f1918" stroke-width="0.4"/><rect x="1158.5" y="217.4" width="15.9" height="23.0" fill="#17181c"/><rect x="1160.2" y="219.1" width="5.4" height="8.9" fill="#c6b2af"/><rect x="1167.3" y="219.1" width="5.4" height="8.9" fill="#c6b2af"/><rect x="1160.2" y="229.8" width="5.4" height="8.9" fill="#c6b2af"/><rect x="1167.3" y="229.8" width="5.4" height="8.9" fill="#c6b2af"/><rect x="1158.5" y="266.5" width="15.9" height="23.0" fill="#17181c"/><rect x="1160.2" y="272.2" width="5.4" height="7.0" fill="#9395a8"/><rect x="1167.3" y="272.2" width="5.4" height="7.0" fill="#9395a8"/><rect x="1160.2" y="280.8" width="5.4" height="7.0" fill="#9395a8"/><rect x="1167.3" y="280.8" width="5.4" height="7.0" fill="#9395a8"/><rect x="1180.3" y="193.0" width="16.0" height="104.0" fill="#3e4149" stroke="#1f1918" stroke-width="0.4"/><rect x="1180.3" y="217.4" width="16.0" height="23.0" fill="#17181c"/><rect x="1182.0" y="219.1" width="5.5" height="8.9" fill="#c6b2af"/><rect x="1189.2" y="219.1" width="5.5" height="8.9" fill="#c6b2af"/><rect x="1182.0" y="229.8" width="5.5" height="8.9" fill="#c6b2af"/><rect x="1189.2" y="229.8" width="5.5" height="8.9" fill="#c6b2af"/><rect x="1180.3" y="266.5" width="16.0" height="23.0" fill="#17181c"/><rect x="1182.0" y="272.2" width="5.5" height="7.0" fill="#9395a8"/><rect x="1189.2" y="272.2" width="5.5" height="7.0" fill="#9395a8"/><rect x="1182.0" y="280.8" width="5.5" height="7.0" fill="#9395a8"/><rect x="1189.2" y="280.8" width="5.5" height="7.0" fill="#9395a8"/><rect x="1203.5" y="193.0" width="15.9" height="128.0" fill="#3e4149" stroke="#1f1918" stroke-width="0.4"/><rect x="1203.5" y="217.4" width="15.9" height="23.0" fill="#17181c"/><rect x="1205.2" y="219.1" width="5.4" height="8.9" fill="#c6b2af"/><rect x="1212.3" y="219.1" width="5.4" height="8.9" fill="#c6b2af"/><rect x="1205.2" y="229.8" width="5.4" height="8.9" fill="#c6b2af"/><rect x="1212.3" y="229.8" width="5.4" height="8.9" fill="#c6b2af"/><rect x="1203.5" y="266.5" width="15.9" height="23.0" fill="#17181c"/><rect x="1205.2" y="272.2" width="5.4" height="7.0" fill="#9395a8"/><rect x="1212.3" y="272.2" width="5.4" height="7.0" fill="#9395a8"/><rect x="1205.2" y="280.8" width="5.4" height="7.0" fill="#9395a8"/><rect x="1212.3" y="280.8" width="5.4" height="7.0" fill="#9395a8"/><rect x="1204.0" y="299.0" width="14.9" height="22.5" fill="#17181c"/><rect x="1205.7" y="305.7" width="4.9" height="6.2" fill="#9395a8"/><rect x="1212.3" y="305.7" width="4.9" height="6.2" fill="#9395a8"/><rect x="1205.7" y="313.6" width="4.9" height="6.2" fill="#9395a8"/><rect x="1212.3" y="313.6" width="4.9" height="6.2" fill="#9395a8"/><rect x="1225.8" y="193.0" width="15.5" height="128.0" fill="#3e4149" stroke="#1f1918" stroke-width="0.4"/><rect x="1225.8" y="217.4" width="15.5" height="23.0" fill="#17181c"/><rect x="1227.5" y="219.1" width="5.2" height="8.9" fill="#c6b2af"/><rect x="1234.4" y="219.1" width="5.2" height="8.9" fill="#c6b2af"/><rect x="1227.5" y="229.8" width="5.2" height="8.9" fill="#c6b2af"/><rect x="1234.4" y="229.8" width="5.2" height="8.9" fill="#c6b2af"/><rect x="1225.8" y="266.5" width="15.5" height="23.0" fill="#17181c"/><rect x="1227.5" y="272.2" width="5.2" height="7.0" fill="#9395a8"/><rect x="1234.4" y="272.2" width="5.2" height="7.0" fill="#9395a8"/><rect x="1227.5" y="280.8" width="5.2" height="7.0" fill="#9395a8"/><rect x="1234.4" y="280.8" width="5.2" height="7.0" fill="#9395a8"/><rect x="1226.3" y="299.0" width="14.5" height="22.5" fill="#17181c"/><rect x="1228.0" y="305.7" width="4.7" height="6.2" fill="#9395a8"/><rect x="1234.4" y="305.7" width="4.7" height="6.2" fill="#9395a8"/><rect x="1228.0" y="313.6" width="4.7" height="6.2" fill="#9395a8"/><rect x="1234.4" y="313.6" width="4.7" height="6.2" fill="#9395a8"/><rect x="1085.5" y="298.0" width="7.0" height="23.0" fill="#17181c"/><rect x="1087.0" y="303.0" width="4.0" height="8.5" fill="#b7999b"/><rect x="995.6" y="204.6" width="14.6" height="27.4" fill="#3e4149" stroke="#1f1918" stroke-width="0.4"/><rect x="995.6" y="217.0" width="14.6" height="15.0" fill="#17181c"/><rect x="997.6" y="218.5" width="5.2" height="12.0" fill="#d9a9a4"/><rect x="1016.9" y="204.6" width="15.4" height="27.4" fill="#3e4149" stroke="#1f1918" stroke-width="0.4"/><rect x="1016.9" y="217.0" width="15.4" height="15.0" fill="#17181c"/><rect x="1018.9" y="218.5" width="5.2" height="12.0" fill="#d9a9a4"/><rect x="1038.5" y="204.6" width="15.4" height="27.4" fill="#3e4149" stroke="#1f1918" stroke-width="0.4"/><rect x="1038.5" y="217.0" width="15.4" height="15.0" fill="#17181c"/><rect x="1040.5" y="218.5" width="5.2" height="12.0" fill="#d9a9a4"/><rect x="997.0" y="237.0" width="8.5" height="24.0" fill="#17181c"/><rect x="998.7" y="238.7" width="5.1" height="9.4" fill="#c4a9ad"/><rect x="998.7" y="249.8" width="5.1" height="9.4" fill="#c4a9ad"/><rect x="1018.5" y="237.0" width="15.5" height="24.5" fill="#3e4149" stroke="#1f1918" stroke-width="0.4"/><rect x="1047.5" y="237.0" width="8.5" height="24.0" fill="#17181c"/><rect x="1049.2" y="238.7" width="5.1" height="9.4" fill="#c4a9ad"/><rect x="1049.2" y="249.8" width="5.1" height="9.4" fill="#c4a9ad"/><rect x="999.4" y="267.0" width="7.6" height="22.5" fill="#17181c"/><rect x="1001.1" y="268.7" width="4.2" height="8.7" fill="#b9a9ad"/><rect x="1001.1" y="279.1" width="4.2" height="8.7" fill="#b9a9ad"/><rect x="1021.3" y="268.5" width="14.1" height="21.0" fill="#17181c"/><rect x="1023.0" y="274.2" width="4.5" height="13.6" fill="#c4aeb2"/><rect x="1029.2" y="274.2" width="4.5" height="13.6" fill="#c4aeb2"/><rect x="1043.0" y="268.5" width="14.2" height="21.0" fill="#17181c"/><rect x="1044.7" y="274.2" width="4.6" height="13.6" fill="#c4aeb2"/><rect x="1051.0" y="274.2" width="4.6" height="13.6" fill="#c4aeb2"/><rect x="1001.5" y="297.5" width="7.0" height="23.5" fill="#17181c"/><rect x="1001.5" y="297.5" width="7.0" height="4.0" fill="#3e4149"/><rect x="1003.0" y="302.5" width="4.0" height="8.5" fill="#b7999b"/><rect x="1023.5" y="297.5" width="7.0" height="23.5" fill="#17181c"/><rect x="1023.5" y="297.5" width="7.0" height="4.0" fill="#3e4149"/><rect x="1025.0" y="302.5" width="4.0" height="8.5" fill="#b7999b"/><rect x="1037.7" y="297.5" width="7.0" height="23.5" fill="#17181c"/><rect x="1037.7" y="297.5" width="7.0" height="4.0" fill="#3e4149"/><rect x="1039.2" y="302.5" width="4.0" height="8.5" fill="#b7999b"/><rect x="1051.8" y="297.5" width="7.0" height="23.5" fill="#17181c"/><rect x="1051.8" y="297.5" width="7.0" height="4.0" fill="#3e4149"/><rect x="1053.3" y="302.5" width="4.0" height="8.5" fill="#b7999b"/><rect x="1254.9" y="204.6" width="15.4" height="29.0" fill="#3e4149" stroke="#1f1918" stroke-width="0.4"/><rect x="1254.9" y="218.0" width="15.4" height="15.6" fill="#17181c"/><rect x="1263.1" y="219.5" width="5.4" height="12.5" fill="#e6c4b4"/><rect x="1277.8" y="204.6" width="15.4" height="29.0" fill="#3e4149" stroke="#1f1918" stroke-width="0.4"/><rect x="1277.8" y="218.0" width="15.4" height="15.6" fill="#17181c"/><rect x="1286.0" y="219.5" width="5.4" height="12.5" fill="#e6c4b4"/><rect x="1299.9" y="204.6" width="15.4" height="29.0" fill="#3e4149" stroke="#1f1918" stroke-width="0.4"/><rect x="1299.9" y="218.0" width="15.4" height="15.6" fill="#17181c"/><rect x="1308.1" y="219.5" width="5.4" height="12.5" fill="#e6c4b4"/><rect x="1254.0" y="238.0" width="8.0" height="24.0" fill="#17181c"/><rect x="1255.7" y="239.7" width="4.6" height="9.4" fill="#b9a9b4"/><rect x="1255.7" y="250.8" width="4.6" height="9.4" fill="#b9a9b4"/><rect x="1276.5" y="238.0" width="16.2" height="24.5" fill="#17181c"/><rect x="1278.2" y="242.7" width="5.6" height="8.2" fill="#b4b0c0"/><rect x="1285.5" y="242.7" width="5.6" height="8.2" fill="#b4b0c0"/><rect x="1278.2" y="252.6" width="5.6" height="8.2" fill="#b4b0c0"/><rect x="1285.5" y="252.6" width="5.6" height="8.2" fill="#b4b0c0"/><rect x="1299.1" y="238.0" width="15.4" height="24.5" fill="#17181c"/><rect x="1300.8" y="242.7" width="5.2" height="8.2" fill="#b4b0c0"/><rect x="1307.7" y="242.7" width="5.2" height="8.2" fill="#b4b0c0"/><rect x="1300.8" y="252.6" width="5.2" height="8.2" fill="#b4b0c0"/><rect x="1307.7" y="252.6" width="5.2" height="8.2" fill="#b4b0c0"/><rect x="1254.1" y="268.0" width="15.4" height="22.7" fill="#17181c"/><rect x="1255.8" y="274.2" width="5.2" height="6.5" fill="#9395a8"/><rect x="1262.7" y="274.2" width="5.2" height="6.5" fill="#9395a8"/><rect x="1255.8" y="282.4" width="5.2" height="6.5" fill="#9395a8"/><rect x="1262.7" y="282.4" width="5.2" height="6.5" fill="#9395a8"/><rect x="1276.5" y="268.0" width="14.9" height="22.7" fill="#17181c"/><rect x="1278.2" y="274.2" width="4.9" height="6.5" fill="#9395a8"/><rect x="1284.8" y="274.2" width="4.9" height="6.5" fill="#9395a8"/><rect x="1278.2" y="282.4" width="4.9" height="6.5" fill="#9395a8"/><rect x="1284.8" y="282.4" width="4.9" height="6.5" fill="#9395a8"/><rect x="1298.6" y="268.0" width="14.6" height="22.7" fill="#17181c"/><rect x="1300.3" y="274.2" width="4.8" height="6.5" fill="#9395a8"/><rect x="1306.8" y="274.2" width="4.8" height="6.5" fill="#9395a8"/><rect x="1300.3" y="282.4" width="4.8" height="6.5" fill="#9395a8"/><rect x="1306.8" y="282.4" width="4.8" height="6.5" fill="#9395a8"/><rect x="1254.1" y="299.0" width="10.3" height="22.5" fill="#17181c"/><rect x="1255.8" y="303.7" width="6.9" height="7.2" fill="#9395a8"/><rect x="1255.8" y="312.6" width="6.9" height="7.2" fill="#9395a8"/><rect x="1276.0" y="299.0" width="14.1" height="22.5" fill="#17181c"/><rect x="1277.7" y="305.7" width="4.5" height="6.2" fill="#9395a8"/><rect x="1283.9" y="305.7" width="4.5" height="6.2" fill="#9395a8"/><rect x="1277.7" y="313.6" width="4.5" height="6.2" fill="#9395a8"/><rect x="1283.9" y="313.6" width="4.5" height="6.2" fill="#9395a8"/><rect x="1297.8" y="299.0" width="14.7" height="22.5" fill="#17181c"/><rect x="1299.5" y="305.7" width="4.8" height="6.2" fill="#9395a8"/><rect x="1306.0" y="305.7" width="4.8" height="6.2" fill="#9395a8"/><rect x="1299.5" y="313.6" width="4.8" height="6.2" fill="#9395a8"/><rect x="1306.0" y="313.6" width="4.8" height="6.2" fill="#9395a8"/><polygon points="1322.0,227.7 1375.0,229.0 1371.0,322.8 1314.5,322.0 1314.5,240.3 1322.0,240.3" fill="#fa8b5a" stroke="#1f1918" stroke-width="0.9" stroke-linejoin="round"/><path d="M1322.0 240.5 L1374.5 241.5" stroke="#1f1918" stroke-width="0.4" fill="none"/><path d="M1060.0 193.0 L1060.0 321.0" stroke="#7a3a22" stroke-width="0.6" fill="none"/><path d="M1084.0 193.0 L1084.0 321.0" stroke="#7a3a22" stroke-width="0.6" fill="none"/><path d="M1105.5 193.0 L1105.5 321.0" stroke="#7a3a22" stroke-width="0.6" fill="none"/><path d="M1129.5 193.0 L1129.5 297.0" stroke="#7a3a22" stroke-width="0.6" fill="none"/><path d="M1153.5 193.0 L1153.5 297.0" stroke="#7a3a22" stroke-width="0.6" fill="none"/><path d="M1177.3 193.0 L1177.3 297.0" stroke="#7a3a22" stroke-width="0.6" fill="none"/><path d="M1199.8 193.0 L1199.8 321.0" stroke="#7a3a22" stroke-width="0.6" fill="none"/><path d="M1222.6 193.0 L1222.6 321.0" stroke="#7a3a22" stroke-width="0.6" fill="none"/><path d="M1246.0 193.0 L1246.0 321.0" stroke="#7a3a22" stroke-width="0.6" fill="none"/><path d="M1273.7 193.0 L1273.7 321.0" stroke="#7a3a22" stroke-width="0.6" fill="none"/><path d="M1296.0 193.0 L1296.0 321.0" stroke="#7a3a22" stroke-width="0.6" fill="none"/><polygon points="942.3,261.1 1373.2,263.0 1373.0,267.6 942.6,265.6" fill="#f6f6f6" stroke="#1f1918" stroke-width="0.35" stroke-linejoin="round"/><path d="M942.6 265.2 L1373.0 267.2" stroke="#9c9c9c" stroke-width="0.8" fill="none"/><polygon points="945.0,289.4 1371.8,292.0 1371.6,297.0 945.3,294.0" fill="#f6f6f6" stroke="#1f1918" stroke-width="0.35" stroke-linejoin="round"/><path d="M945.3 293.6 L1371.6 296.6" stroke="#9c9c9c" stroke-width="0.8" fill="none"/><polygon points="967.5,290.0 1014.5,290.3 1016.0,293.0 1011.5,296.8 968.5,296.5" fill="#3e4149" stroke="#17181c" stroke-width="0.5" stroke-linejoin="round"/><path d="M969.0 291.2 L1013.0 291.5" stroke="#9a9a9a" stroke-width="0.6" fill="none"/><polygon points="1225.5,292.3 1270.0,292.6 1270.0,299.0 1226.0,298.6" fill="#3e4149" stroke="#17181c" stroke-width="0.5" stroke-linejoin="round"/><path d="M1226.0 293.0 L1269.5 293.2" stroke="#e8e8e8" stroke-width="0.7" fill="none"/><polygon points="947.0,319.3 1115.0,321.5 1113.8,344.8 949.3,342.2" fill="#3e4149" stroke="#1f1918" stroke-width="0.5" stroke-linejoin="round"/><polygon points="1197.6,321.5 1371.2,322.8 1370.6,347.8 1197.6,346.0" fill="#3e4149" stroke="#1f1918" stroke-width="0.5" stroke-linejoin="round"/><polygon points="976.3,329.2 1004.5,319.4 1012.3,316.0 1011.7,324.0 991.7,326.7 977.6,334.4" fill="#707070"/><polygon points="1237.1,338.0 1237.5,331.5 1252.0,325.0 1268.3,317.5 1270.0,324.0 1270.0,331.0 1252.4,330.8" fill="#686868"/><path d="M1252.4 330.4 L1269.6 330.4" stroke="#c8c8c8" stroke-width="0.7" fill="none"/><circle cx="970.4" cy="325.9" r="1.9" fill="#15161a"/><circle cx="1228.9" cy="328.7" r="1.9" fill="#15161a"/><circle cx="1282.4" cy="329.2" r="1.9" fill="#15161a"/><circle cx="1338.4" cy="330" r="1.9" fill="#15161a"/><rect x="1265.8" y="329.6" width="1.8" height="1.8" fill="#15161a"/><rect x="1316.0" y="337.0" width="2.6" height="3.0" fill="#6b6b63"/><path d="M970.6 256.0 L970.6 264.0" stroke="#1010e0" stroke-width="0.9" fill="none"/><path d="M970.6 264.0 L966.0 265.5" stroke="#00c000" stroke-width="0.9" fill="none"/><path d="M970.6 264.0 L965.0 263.6" stroke="#e00000" stroke-width="0.8" fill="none"/></svg>
<svg class="b" style="left:2px;top:5px;" width="48" height="15" viewBox="0 0 48 15"><rect width="48" height="15" fill="#fff"/><g fill="none" stroke="#161616" stroke-width="1.55" transform="translate(-2,-5)"><path d="M6.8 8.4 V17.4"/><path d="M9.3 9.1 H14 Q15.7 9.1 15.7 10.9 Q15.7 12.8 14 12.8 H10.8 M14 12.8 Q16 12.8 16 14.9 Q16 16.9 14 16.9 H9.3"/><path d="M18.6 10.6 V17.4"/><path d="M22.2 17.4 V8.8 L27 16.6 L31.7 8.8 V17.4" stroke-linejoin="bevel"/><path d="M36.1 10.6 V17.4"/><path d="M39.3 9.1 H46.8 M43 9.1 V17.4"/></g><rect x="15.8" y="3.3" width="1.6" height="1.5" fill="#161616"/><rect x="33" y="3" width="2.1" height="1.9" fill="#f00000"/></svg>
<div class="b" style="left:1858px;top:296px;width:1px;height:2px;background:#6e3410;"></div>
<div class="b" style="left:1858px;top:611px;width:1px;height:2px;background:#6e3410;"></div>
</div></body></html>
